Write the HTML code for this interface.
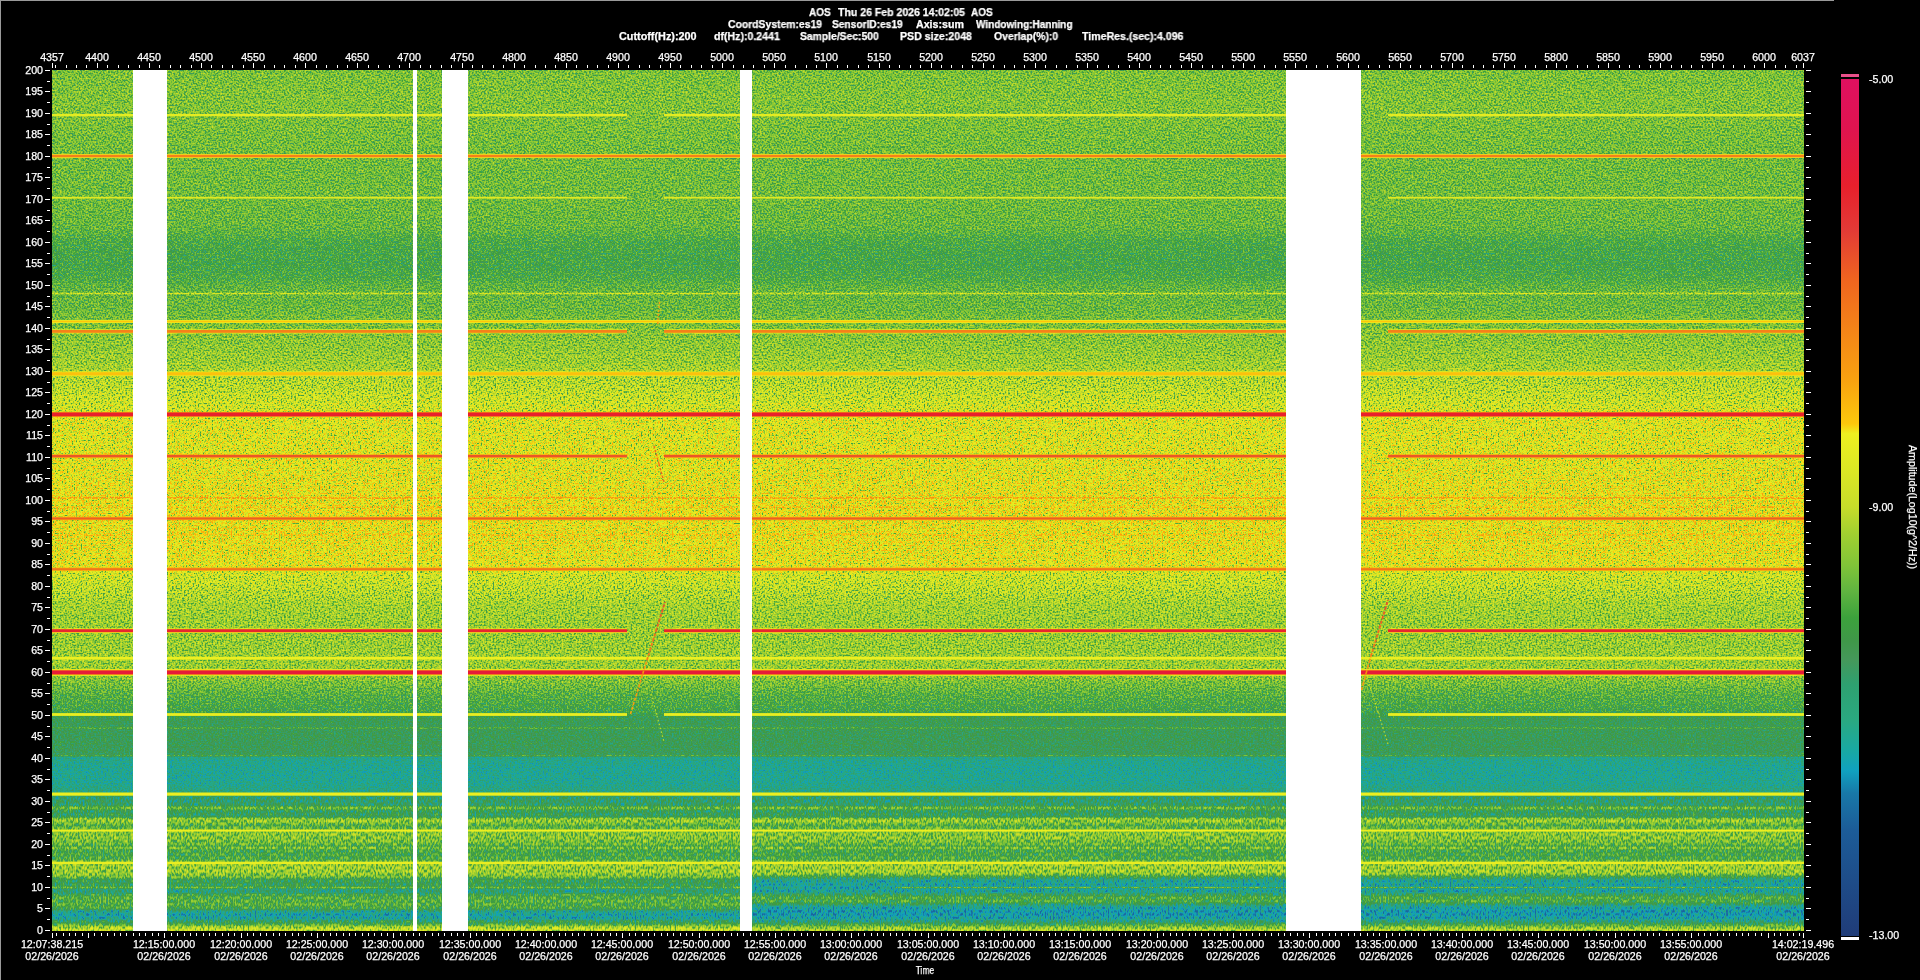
<!DOCTYPE html>
<html><head><meta charset="utf-8"><title>Spectrogram</title>
<style>
html,body{margin:0;padding:0;background:#000;}
body{width:1920px;height:980px;position:relative;overflow:hidden;font-family:"Liberation Sans",sans-serif;color:#fff;font-size:10.667px;}
.t{position:absolute;will-change:transform;-webkit-text-stroke:0.25px #fff;white-space:nowrap;line-height:12px;height:12px;}
.b{font-weight:bold;}
.c{transform:translateX(-50%);text-align:center;}
.r{text-align:right;}
svg{position:absolute;left:0;top:0;}
</style></head><body>

<svg width="1920" height="980" viewBox="0 0 1920 980" shape-rendering="crispEdges">
<defs>
<linearGradient id="prof" gradientUnits="userSpaceOnUse" x1="0" y1="70" x2="0" y2="931">
<stop offset="0.00000" stop-color="#6e6e6e"/>
<stop offset="0.03484" stop-color="#707070"/>
<stop offset="0.09292" stop-color="#6c6c6c"/>
<stop offset="0.15099" stop-color="#6b6b6b"/>
<stop offset="0.18002" stop-color="#696969"/>
<stop offset="0.18931" stop-color="#666666"/>
<stop offset="0.19512" stop-color="#626262"/>
<stop offset="0.20093" stop-color="#606060"/>
<stop offset="0.21487" stop-color="#5e5e5e"/>
<stop offset="0.22997" stop-color="#5e5e5e"/>
<stop offset="0.23693" stop-color="#606060"/>
<stop offset="0.24274" stop-color="#616161"/>
<stop offset="0.24971" stop-color="#666666"/>
<stop offset="0.26249" stop-color="#696969"/>
<stop offset="0.27875" stop-color="#6a6a6a"/>
<stop offset="0.29036" stop-color="#6d6d6d"/>
<stop offset="0.30778" stop-color="#717171"/>
<stop offset="0.33101" stop-color="#757575"/>
<stop offset="0.34843" stop-color="#797979"/>
<stop offset="0.36005" stop-color="#7e7e7e"/>
<stop offset="0.37747" stop-color="#838383"/>
<stop offset="0.39489" stop-color="#888888"/>
<stop offset="0.40418" stop-color="#8c8c8c"/>
<stop offset="0.42973" stop-color="#8c8c8c"/>
<stop offset="0.46458" stop-color="#8e8e8e"/>
<stop offset="0.49942" stop-color="#919191"/>
<stop offset="0.54588" stop-color="#919191"/>
<stop offset="0.57491" stop-color="#8e8e8e"/>
<stop offset="0.58653" stop-color="#878787"/>
<stop offset="0.60395" stop-color="#808080"/>
<stop offset="0.62137" stop-color="#797979"/>
<stop offset="0.64460" stop-color="#767676"/>
<stop offset="0.67364" stop-color="#767676"/>
<stop offset="0.69454" stop-color="#767676"/>
<stop offset="0.70383" stop-color="#737373"/>
<stop offset="0.71429" stop-color="#6c6c6c"/>
<stop offset="0.72590" stop-color="#646464"/>
<stop offset="0.73751" stop-color="#606060"/>
<stop offset="0.74564" stop-color="#5c5c5c"/>
<stop offset="0.75029" stop-color="#565656"/>
<stop offset="0.76074" stop-color="#545454"/>
<stop offset="0.77816" stop-color="#545454"/>
<stop offset="0.79559" stop-color="#535353"/>
<stop offset="0.79791" stop-color="#414141"/>
<stop offset="0.81301" stop-color="#3d3d3d"/>
<stop offset="0.82811" stop-color="#3e3e3e"/>
<stop offset="0.83624" stop-color="#434343"/>
<stop offset="0.83856" stop-color="#434343"/>
<stop offset="0.84437" stop-color="#4d4d4d"/>
<stop offset="0.85366" stop-color="#4e4e4e"/>
<stop offset="0.85540" stop-color="#606060"/>
<stop offset="0.85714" stop-color="#6c6c6c"/>
<stop offset="0.85889" stop-color="#606060"/>
<stop offset="0.86063" stop-color="#535353"/>
<stop offset="0.86760" stop-color="#565656"/>
<stop offset="0.86934" stop-color="#707070"/>
<stop offset="0.87224" stop-color="#767676"/>
<stop offset="0.87515" stop-color="#6c6c6c"/>
<stop offset="0.87689" stop-color="#636363"/>
<stop offset="0.88037" stop-color="#666666"/>
<stop offset="0.88269" stop-color="#707070"/>
<stop offset="0.88618" stop-color="#707070"/>
<stop offset="0.89199" stop-color="#717171"/>
<stop offset="0.89895" stop-color="#696969"/>
<stop offset="0.90128" stop-color="#606060"/>
<stop offset="0.90244" stop-color="#666666"/>
<stop offset="0.90360" stop-color="#737373"/>
<stop offset="0.90476" stop-color="#666666"/>
<stop offset="0.90592" stop-color="#606060"/>
<stop offset="0.90825" stop-color="#5e5e5e"/>
<stop offset="0.91638" stop-color="#606060"/>
<stop offset="0.91870" stop-color="#696969"/>
<stop offset="0.92334" stop-color="#767676"/>
<stop offset="0.93148" stop-color="#767676"/>
<stop offset="0.93728" stop-color="#6c6c6c"/>
<stop offset="0.93961" stop-color="#595959"/>
<stop offset="0.94657" stop-color="#545454"/>
<stop offset="0.94890" stop-color="#606060"/>
<stop offset="0.94971" stop-color="#696969"/>
<stop offset="0.95064" stop-color="#595959"/>
<stop offset="0.95180" stop-color="#494949"/>
<stop offset="0.95528" stop-color="#494949"/>
<stop offset="0.95761" stop-color="#5c5c5c"/>
<stop offset="0.96167" stop-color="#636363"/>
<stop offset="0.96980" stop-color="#636363"/>
<stop offset="0.97445" stop-color="#5c5c5c"/>
<stop offset="0.97677" stop-color="#434343"/>
<stop offset="0.98142" stop-color="#363636"/>
<stop offset="0.98606" stop-color="#3d3d3d"/>
<stop offset="0.98839" stop-color="#535353"/>
<stop offset="0.99187" stop-color="#5c5c5c"/>
<stop offset="0.99477" stop-color="#767676"/>
<stop offset="0.99768" stop-color="#838383"/>
<stop offset="1.00000" stop-color="#808080"/>
</linearGradient>
<linearGradient id="profr" gradientUnits="userSpaceOnUse" x1="0" y1="874" x2="0" y2="931">
<stop offset="0.00000" stop-color="#707070"/>
<stop offset="0.05263" stop-color="#595959"/>
<stop offset="0.10526" stop-color="#404040"/>
<stop offset="0.21053" stop-color="#393939"/>
<stop offset="0.31579" stop-color="#3d3d3d"/>
<stop offset="0.35965" stop-color="#535353"/>
<stop offset="0.40351" stop-color="#606060"/>
<stop offset="0.49123" stop-color="#606060"/>
<stop offset="0.53509" stop-color="#4d4d4d"/>
<stop offset="0.57895" stop-color="#393939"/>
<stop offset="0.68421" stop-color="#303030"/>
<stop offset="0.77193" stop-color="#363636"/>
<stop offset="0.82456" stop-color="#464646"/>
<stop offset="0.87719" stop-color="#595959"/>
<stop offset="0.92982" stop-color="#707070"/>
<stop offset="0.97368" stop-color="#7c7c7c"/>
<stop offset="1.00000" stop-color="#797979"/>
</linearGradient>
<filter id="spec0" x="0" y="0" width="100%" height="100%" filterUnits="objectBoundingBox" color-interpolation-filters="sRGB">
<feTurbulence type="fractalNoise" baseFrequency="0.58 0.6" numOctaves="1" seed="7" result="n"/>
<feColorMatrix in="n" type="matrix" values="1 0 0 0 0  1 0 0 0 0  1 0 0 0 0  0 0 0 0 1" result="ng"/>
<feTurbulence type="fractalNoise" baseFrequency="0.12 0.15" numOctaves="2" seed="23" result="m"/>
<feColorMatrix in="m" type="matrix" values="1 0 0 0 0  1 0 0 0 0  1 0 0 0 0  0 0 0 0 1" result="mg"/>
<feComponentTransfer in="ng" result="nt"><feFuncR type="table" tableValues="0.0000 0.0000 0.0000 0.0000 0.0000 0.0000 0.0000 0.0000 0.0000 0.0000 0.0000 0.0000 0.0000 0.0000 0.0000 0.0000 0.0765 0.1592 0.2283 0.2886 0.3478 0.3994 0.4493 0.5001 0.5505 0.5996 0.6443 0.6804 0.7148 0.7463 0.7742 0.8021 0.8284 0.8527 0.8785 0.9079 0.9405 0.9724 1.0000 1.0000 1.0000 1.0000 1.0000 1.0000 1.0000 1.0000 1.0000 1.0000 1.0000 1.0000 1.0000 1.0000"/><feFuncG type="table" tableValues="0.0000 0.0000 0.0000 0.0000 0.0000 0.0000 0.0000 0.0000 0.0000 0.0000 0.0000 0.0000 0.0000 0.0000 0.0000 0.0000 0.0765 0.1592 0.2283 0.2886 0.3478 0.3994 0.4493 0.5001 0.5505 0.5996 0.6443 0.6804 0.7148 0.7463 0.7742 0.8021 0.8284 0.8527 0.8785 0.9079 0.9405 0.9724 1.0000 1.0000 1.0000 1.0000 1.0000 1.0000 1.0000 1.0000 1.0000 1.0000 1.0000 1.0000 1.0000 1.0000"/><feFuncB type="table" tableValues="0.0000 0.0000 0.0000 0.0000 0.0000 0.0000 0.0000 0.0000 0.0000 0.0000 0.0000 0.0000 0.0000 0.0000 0.0000 0.0000 0.0765 0.1592 0.2283 0.2886 0.3478 0.3994 0.4493 0.5001 0.5505 0.5996 0.6443 0.6804 0.7148 0.7463 0.7742 0.8021 0.8284 0.8527 0.8785 0.9079 0.9405 0.9724 1.0000 1.0000 1.0000 1.0000 1.0000 1.0000 1.0000 1.0000 1.0000 1.0000 1.0000 1.0000 1.0000 1.0000"/></feComponentTransfer>
<feComposite in="SourceGraphic" in2="nt" operator="arithmetic" k1="0" k2="1" k3="0.2000" k4="-0.1250" result="s1"/>
<feComposite in="s1" in2="mg" operator="arithmetic" k1="0" k2="1" k3="0.04" k4="-0.02" result="sum"/>
<feComponentTransfer in="sum">
<feFuncR type="table" tableValues="0.1176 0.1157 0.1137 0.1117 0.1097 0.1077 0.1058 0.1038 0.1014 0.0942 0.0870 0.0782 0.0665 0.0776 0.1012 0.1306 0.1600 0.1697 0.1756 0.1902 0.2392 0.2647 0.2484 0.2406 0.2522 0.3228 0.3922 0.4575 0.5197 0.5753 0.6308 0.7029 0.7765 0.8073 0.8381 0.8679 0.8939 0.9198 0.9699 0.9848 0.9802 0.9756 0.9712 0.9668 0.9624 0.9581 0.9538 0.9495 0.9453 0.9406 0.9260 0.9114 0.8968 0.8883 0.8955 0.9026 0.9098 0.9023 0.8947 0.8872 0.8796 0.8784 0.8784 0.8784 0.8784"/>
<feFuncG type="table" tableValues="0.3294 0.3453 0.3611 0.3769 0.3928 0.4086 0.4245 0.4403 0.4581 0.4985 0.5389 0.5782 0.6155 0.6423 0.6588 0.6588 0.6588 0.6488 0.6370 0.6240 0.6070 0.5961 0.5961 0.6176 0.6438 0.6791 0.7137 0.7464 0.7749 0.7945 0.8141 0.8382 0.8627 0.8796 0.8964 0.9121 0.9236 0.9352 0.8366 0.7497 0.7041 0.6585 0.6177 0.5872 0.5567 0.5262 0.4939 0.4608 0.4278 0.3943 0.3494 0.3046 0.2597 0.2187 0.1877 0.1566 0.1255 0.1142 0.1029 0.0916 0.0802 0.0750 0.0709 0.0668 0.0627"/>
<feFuncB type="table" tableValues="0.5647 0.5756 0.5865 0.5974 0.6083 0.6192 0.6301 0.6410 0.6526 0.6728 0.6930 0.7160 0.7440 0.7011 0.6290 0.5702 0.5114 0.4820 0.4582 0.4298 0.3829 0.3353 0.2863 0.2566 0.2372 0.2450 0.2471 0.2307 0.2154 0.2024 0.1893 0.1770 0.1647 0.1563 0.1479 0.1400 0.1343 0.1285 0.0732 0.0505 0.0551 0.0596 0.0655 0.0742 0.0830 0.0917 0.0995 0.1069 0.1144 0.1225 0.1465 0.1705 0.1945 0.2084 0.1965 0.1845 0.1725 0.2046 0.2367 0.2687 0.3008 0.3213 0.3397 0.3581 0.3765"/>
</feComponentTransfer>
</filter>
<filter id="spec1" x="0" y="0" width="100%" height="100%" filterUnits="objectBoundingBox" color-interpolation-filters="sRGB">
<feTurbulence type="fractalNoise" baseFrequency="0.58 0.6" numOctaves="1" seed="9" result="n"/>
<feColorMatrix in="n" type="matrix" values="1 0 0 0 0  1 0 0 0 0  1 0 0 0 0  0 0 0 0 1" result="ng"/>
<feTurbulence type="fractalNoise" baseFrequency="0.12 0.15" numOctaves="2" seed="23" result="m"/>
<feColorMatrix in="m" type="matrix" values="1 0 0 0 0  1 0 0 0 0  1 0 0 0 0  0 0 0 0 1" result="mg"/>
<feComponentTransfer in="ng" result="nt"><feFuncR type="table" tableValues="0.0000 0.0000 0.0000 0.0000 0.0000 0.0000 0.0000 0.0000 0.0000 0.0000 0.0000 0.0000 0.0000 0.0000 0.0000 0.0280 0.1293 0.2116 0.2797 0.3384 0.3954 0.4445 0.4915 0.5387 0.5850 0.6295 0.6693 0.7012 0.7310 0.7581 0.7818 0.8053 0.8272 0.8474 0.8684 0.8923 0.9184 0.9438 0.9673 0.9889 1.0000 1.0000 1.0000 1.0000 1.0000 1.0000 1.0000 1.0000 1.0000 1.0000 1.0000 1.0000"/><feFuncG type="table" tableValues="0.0000 0.0000 0.0000 0.0000 0.0000 0.0000 0.0000 0.0000 0.0000 0.0000 0.0000 0.0000 0.0000 0.0000 0.0000 0.0280 0.1293 0.2116 0.2797 0.3384 0.3954 0.4445 0.4915 0.5387 0.5850 0.6295 0.6693 0.7012 0.7310 0.7581 0.7818 0.8053 0.8272 0.8474 0.8684 0.8923 0.9184 0.9438 0.9673 0.9889 1.0000 1.0000 1.0000 1.0000 1.0000 1.0000 1.0000 1.0000 1.0000 1.0000 1.0000 1.0000"/><feFuncB type="table" tableValues="0.0000 0.0000 0.0000 0.0000 0.0000 0.0000 0.0000 0.0000 0.0000 0.0000 0.0000 0.0000 0.0000 0.0000 0.0000 0.0280 0.1293 0.2116 0.2797 0.3384 0.3954 0.4445 0.4915 0.5387 0.5850 0.6295 0.6693 0.7012 0.7310 0.7581 0.7818 0.8053 0.8272 0.8474 0.8684 0.8923 0.9184 0.9438 0.9673 0.9889 1.0000 1.0000 1.0000 1.0000 1.0000 1.0000 1.0000 1.0000 1.0000 1.0000 1.0000 1.0000"/></feComponentTransfer>
<feComposite in="SourceGraphic" in2="nt" operator="arithmetic" k1="0" k2="1" k3="0.2875" k4="-0.1875" result="s1"/>
<feComposite in="s1" in2="mg" operator="arithmetic" k1="0" k2="1" k3="0.04" k4="-0.02" result="sum"/>
<feComponentTransfer in="sum">
<feFuncR type="table" tableValues="0.1176 0.1157 0.1137 0.1117 0.1097 0.1077 0.1058 0.1038 0.1014 0.0942 0.0870 0.0782 0.0665 0.0776 0.1012 0.1306 0.1600 0.1697 0.1756 0.1902 0.2392 0.2647 0.2484 0.2406 0.2522 0.3228 0.3922 0.4575 0.5197 0.5753 0.6308 0.7029 0.7765 0.8073 0.8381 0.8679 0.8939 0.9198 0.9699 0.9848 0.9802 0.9756 0.9712 0.9668 0.9624 0.9581 0.9538 0.9495 0.9453 0.9406 0.9260 0.9114 0.8968 0.8883 0.8955 0.9026 0.9098 0.9023 0.8947 0.8872 0.8796 0.8784 0.8784 0.8784 0.8784"/>
<feFuncG type="table" tableValues="0.3294 0.3453 0.3611 0.3769 0.3928 0.4086 0.4245 0.4403 0.4581 0.4985 0.5389 0.5782 0.6155 0.6423 0.6588 0.6588 0.6588 0.6488 0.6370 0.6240 0.6070 0.5961 0.5961 0.6176 0.6438 0.6791 0.7137 0.7464 0.7749 0.7945 0.8141 0.8382 0.8627 0.8796 0.8964 0.9121 0.9236 0.9352 0.8366 0.7497 0.7041 0.6585 0.6177 0.5872 0.5567 0.5262 0.4939 0.4608 0.4278 0.3943 0.3494 0.3046 0.2597 0.2187 0.1877 0.1566 0.1255 0.1142 0.1029 0.0916 0.0802 0.0750 0.0709 0.0668 0.0627"/>
<feFuncB type="table" tableValues="0.5647 0.5756 0.5865 0.5974 0.6083 0.6192 0.6301 0.6410 0.6526 0.6728 0.6930 0.7160 0.7440 0.7011 0.6290 0.5702 0.5114 0.4820 0.4582 0.4298 0.3829 0.3353 0.2863 0.2566 0.2372 0.2450 0.2471 0.2307 0.2154 0.2024 0.1893 0.1770 0.1647 0.1563 0.1479 0.1400 0.1343 0.1285 0.0732 0.0505 0.0551 0.0596 0.0655 0.0742 0.0830 0.0917 0.0995 0.1069 0.1144 0.1225 0.1465 0.1705 0.1945 0.2084 0.1965 0.1845 0.1725 0.2046 0.2367 0.2687 0.3008 0.3213 0.3397 0.3581 0.3765"/>
</feComponentTransfer>
</filter>
<filter id="spec2" x="0" y="0" width="100%" height="100%" filterUnits="objectBoundingBox" color-interpolation-filters="sRGB">
<feTurbulence type="fractalNoise" baseFrequency="0.58 0.6" numOctaves="1" seed="17" result="n"/>
<feColorMatrix in="n" type="matrix" values="1 0 0 0 0  1 0 0 0 0  1 0 0 0 0  0 0 0 0 1" result="ng"/>
<feTurbulence type="fractalNoise" baseFrequency="0.12 0.15" numOctaves="2" seed="23" result="m"/>
<feColorMatrix in="m" type="matrix" values="1 0 0 0 0  1 0 0 0 0  1 0 0 0 0  0 0 0 0 1" result="mg"/>
<feComponentTransfer in="ng" result="nt"><feFuncR type="table" tableValues="0.0000 0.0000 0.0000 0.0000 0.0000 0.0000 0.0000 0.0000 0.0000 0.0000 0.0000 0.0000 0.0000 0.0000 0.0000 0.0000 0.0149 0.1031 0.1769 0.2412 0.3043 0.3593 0.4126 0.4668 0.5206 0.5729 0.6205 0.6591 0.6957 0.7294 0.7591 0.7889 0.8169 0.8429 0.8704 0.9017 0.9365 0.9706 1.0000 1.0000 1.0000 1.0000 1.0000 1.0000 1.0000 1.0000 1.0000 1.0000 1.0000 1.0000 1.0000 1.0000"/><feFuncG type="table" tableValues="0.0000 0.0000 0.0000 0.0000 0.0000 0.0000 0.0000 0.0000 0.0000 0.0000 0.0000 0.0000 0.0000 0.0000 0.0000 0.0000 0.0149 0.1031 0.1769 0.2412 0.3043 0.3593 0.4126 0.4668 0.5206 0.5729 0.6205 0.6591 0.6957 0.7294 0.7591 0.7889 0.8169 0.8429 0.8704 0.9017 0.9365 0.9706 1.0000 1.0000 1.0000 1.0000 1.0000 1.0000 1.0000 1.0000 1.0000 1.0000 1.0000 1.0000 1.0000 1.0000"/><feFuncB type="table" tableValues="0.0000 0.0000 0.0000 0.0000 0.0000 0.0000 0.0000 0.0000 0.0000 0.0000 0.0000 0.0000 0.0000 0.0000 0.0000 0.0000 0.0149 0.1031 0.1769 0.2412 0.3043 0.3593 0.4126 0.4668 0.5206 0.5729 0.6205 0.6591 0.6957 0.7294 0.7591 0.7889 0.8169 0.8429 0.8704 0.9017 0.9365 0.9706 1.0000 1.0000 1.0000 1.0000 1.0000 1.0000 1.0000 1.0000 1.0000 1.0000 1.0000 1.0000 1.0000 1.0000"/></feComponentTransfer>
<feComposite in="SourceGraphic" in2="nt" operator="arithmetic" k1="0" k2="1" k3="0.1875" k4="-0.1125" result="s1"/>
<feComposite in="s1" in2="mg" operator="arithmetic" k1="0" k2="1" k3="0.04" k4="-0.02" result="sum"/>
<feComponentTransfer in="sum">
<feFuncR type="table" tableValues="0.1176 0.1157 0.1137 0.1117 0.1097 0.1077 0.1058 0.1038 0.1014 0.0942 0.0870 0.0782 0.0665 0.0776 0.1012 0.1306 0.1600 0.1697 0.1756 0.1902 0.2392 0.2647 0.2484 0.2406 0.2522 0.3228 0.3922 0.4575 0.5197 0.5753 0.6308 0.7029 0.7765 0.8073 0.8381 0.8679 0.8939 0.9198 0.9699 0.9848 0.9802 0.9756 0.9712 0.9668 0.9624 0.9581 0.9538 0.9495 0.9453 0.9406 0.9260 0.9114 0.8968 0.8883 0.8955 0.9026 0.9098 0.9023 0.8947 0.8872 0.8796 0.8784 0.8784 0.8784 0.8784"/>
<feFuncG type="table" tableValues="0.3294 0.3453 0.3611 0.3769 0.3928 0.4086 0.4245 0.4403 0.4581 0.4985 0.5389 0.5782 0.6155 0.6423 0.6588 0.6588 0.6588 0.6488 0.6370 0.6240 0.6070 0.5961 0.5961 0.6176 0.6438 0.6791 0.7137 0.7464 0.7749 0.7945 0.8141 0.8382 0.8627 0.8796 0.8964 0.9121 0.9236 0.9352 0.8366 0.7497 0.7041 0.6585 0.6177 0.5872 0.5567 0.5262 0.4939 0.4608 0.4278 0.3943 0.3494 0.3046 0.2597 0.2187 0.1877 0.1566 0.1255 0.1142 0.1029 0.0916 0.0802 0.0750 0.0709 0.0668 0.0627"/>
<feFuncB type="table" tableValues="0.5647 0.5756 0.5865 0.5974 0.6083 0.6192 0.6301 0.6410 0.6526 0.6728 0.6930 0.7160 0.7440 0.7011 0.6290 0.5702 0.5114 0.4820 0.4582 0.4298 0.3829 0.3353 0.2863 0.2566 0.2372 0.2450 0.2471 0.2307 0.2154 0.2024 0.1893 0.1770 0.1647 0.1563 0.1479 0.1400 0.1343 0.1285 0.0732 0.0505 0.0551 0.0596 0.0655 0.0742 0.0830 0.0917 0.0995 0.1069 0.1144 0.1225 0.1465 0.1705 0.1945 0.2084 0.1965 0.1845 0.1725 0.2046 0.2367 0.2687 0.3008 0.3213 0.3397 0.3581 0.3765"/>
</feComponentTransfer>
</filter>
<filter id="spec3" x="0" y="0" width="100%" height="100%" filterUnits="objectBoundingBox" color-interpolation-filters="sRGB">
<feTurbulence type="fractalNoise" baseFrequency="0.58 0.6" numOctaves="1" seed="13" result="n"/>
<feColorMatrix in="n" type="matrix" values="1 0 0 0 0  1 0 0 0 0  1 0 0 0 0  0 0 0 0 1" result="ng"/>
<feTurbulence type="fractalNoise" baseFrequency="0.12 0.15" numOctaves="2" seed="23" result="m"/>
<feColorMatrix in="m" type="matrix" values="1 0 0 0 0  1 0 0 0 0  1 0 0 0 0  0 0 0 0 1" result="mg"/>
<feComponentTransfer in="ng" result="nt"><feFuncR type="table" tableValues="0.0000 0.0000 0.0000 0.0000 0.0000 0.0000 0.0000 0.0000 0.0000 0.0000 0.0000 0.0000 0.0000 0.0000 0.0000 0.0000 0.0515 0.1212 0.1806 0.2333 0.2859 0.3324 0.3782 0.4255 0.4733 0.5207 0.5656 0.6040 0.6410 0.6755 0.7064 0.7378 0.7677 0.7958 0.8258 0.8605 0.8996 0.9384 0.9752 1.0000 1.0000 1.0000 1.0000 1.0000 1.0000 1.0000 1.0000 1.0000 1.0000 1.0000 1.0000 1.0000"/><feFuncG type="table" tableValues="0.0000 0.0000 0.0000 0.0000 0.0000 0.0000 0.0000 0.0000 0.0000 0.0000 0.0000 0.0000 0.0000 0.0000 0.0000 0.0000 0.0515 0.1212 0.1806 0.2333 0.2859 0.3324 0.3782 0.4255 0.4733 0.5207 0.5656 0.6040 0.6410 0.6755 0.7064 0.7378 0.7677 0.7958 0.8258 0.8605 0.8996 0.9384 0.9752 1.0000 1.0000 1.0000 1.0000 1.0000 1.0000 1.0000 1.0000 1.0000 1.0000 1.0000 1.0000 1.0000"/><feFuncB type="table" tableValues="0.0000 0.0000 0.0000 0.0000 0.0000 0.0000 0.0000 0.0000 0.0000 0.0000 0.0000 0.0000 0.0000 0.0000 0.0000 0.0000 0.0515 0.1212 0.1806 0.2333 0.2859 0.3324 0.3782 0.4255 0.4733 0.5207 0.5656 0.6040 0.6410 0.6755 0.7064 0.7378 0.7677 0.7958 0.8258 0.8605 0.8996 0.9384 0.9752 1.0000 1.0000 1.0000 1.0000 1.0000 1.0000 1.0000 1.0000 1.0000 1.0000 1.0000 1.0000 1.0000"/></feComponentTransfer>
<feComposite in="SourceGraphic" in2="nt" operator="arithmetic" k1="0" k2="1" k3="0.1375" k4="-0.0750" result="s1"/>
<feComposite in="s1" in2="mg" operator="arithmetic" k1="0" k2="1" k3="0.04" k4="-0.02" result="sum"/>
<feComponentTransfer in="sum">
<feFuncR type="table" tableValues="0.1176 0.1157 0.1137 0.1117 0.1097 0.1077 0.1058 0.1038 0.1014 0.0942 0.0870 0.0782 0.0665 0.0776 0.1012 0.1306 0.1600 0.1697 0.1756 0.1902 0.2392 0.2647 0.2484 0.2406 0.2522 0.3228 0.3922 0.4575 0.5197 0.5753 0.6308 0.7029 0.7765 0.8073 0.8381 0.8679 0.8939 0.9198 0.9699 0.9848 0.9802 0.9756 0.9712 0.9668 0.9624 0.9581 0.9538 0.9495 0.9453 0.9406 0.9260 0.9114 0.8968 0.8883 0.8955 0.9026 0.9098 0.9023 0.8947 0.8872 0.8796 0.8784 0.8784 0.8784 0.8784"/>
<feFuncG type="table" tableValues="0.3294 0.3453 0.3611 0.3769 0.3928 0.4086 0.4245 0.4403 0.4581 0.4985 0.5389 0.5782 0.6155 0.6423 0.6588 0.6588 0.6588 0.6488 0.6370 0.6240 0.6070 0.5961 0.5961 0.6176 0.6438 0.6791 0.7137 0.7464 0.7749 0.7945 0.8141 0.8382 0.8627 0.8796 0.8964 0.9121 0.9236 0.9352 0.8366 0.7497 0.7041 0.6585 0.6177 0.5872 0.5567 0.5262 0.4939 0.4608 0.4278 0.3943 0.3494 0.3046 0.2597 0.2187 0.1877 0.1566 0.1255 0.1142 0.1029 0.0916 0.0802 0.0750 0.0709 0.0668 0.0627"/>
<feFuncB type="table" tableValues="0.5647 0.5756 0.5865 0.5974 0.6083 0.6192 0.6301 0.6410 0.6526 0.6728 0.6930 0.7160 0.7440 0.7011 0.6290 0.5702 0.5114 0.4820 0.4582 0.4298 0.3829 0.3353 0.2863 0.2566 0.2372 0.2450 0.2471 0.2307 0.2154 0.2024 0.1893 0.1770 0.1647 0.1563 0.1479 0.1400 0.1343 0.1285 0.0732 0.0505 0.0551 0.0596 0.0655 0.0742 0.0830 0.0917 0.0995 0.1069 0.1144 0.1225 0.1465 0.1705 0.1945 0.2084 0.1965 0.1845 0.1725 0.2046 0.2367 0.2687 0.3008 0.3213 0.3397 0.3581 0.3765"/>
</feComponentTransfer>
</filter>
<filter id="spec4" x="0" y="0" width="100%" height="100%" filterUnits="objectBoundingBox" color-interpolation-filters="sRGB">
<feTurbulence type="fractalNoise" baseFrequency="0.6 0.3" numOctaves="1" seed="11" result="n"/>
<feColorMatrix in="n" type="matrix" values="1 0 0 0 0  1 0 0 0 0  1 0 0 0 0  0 0 0 0 1" result="ng"/>
<feTurbulence type="fractalNoise" baseFrequency="0.12 0.15" numOctaves="2" seed="23" result="m"/>
<feColorMatrix in="m" type="matrix" values="1 0 0 0 0  1 0 0 0 0  1 0 0 0 0  0 0 0 0 1" result="mg"/>
<feComponentTransfer in="ng" result="nt"><feFuncR type="table" tableValues="0.0000 0.0000 0.0000 0.0000 0.0000 0.0000 0.0000 0.0000 0.0000 0.0000 0.0000 0.0000 0.0000 0.0000 0.0000 0.0000 0.0765 0.1592 0.2283 0.2886 0.3478 0.3994 0.4493 0.5001 0.5505 0.5996 0.6455 0.6839 0.7204 0.7539 0.7835 0.8131 0.8411 0.8670 0.8943 0.9256 0.9602 0.9941 1.0000 1.0000 1.0000 1.0000 1.0000 1.0000 1.0000 1.0000 1.0000 1.0000 1.0000 1.0000 1.0000 1.0000"/><feFuncG type="table" tableValues="0.0000 0.0000 0.0000 0.0000 0.0000 0.0000 0.0000 0.0000 0.0000 0.0000 0.0000 0.0000 0.0000 0.0000 0.0000 0.0000 0.0765 0.1592 0.2283 0.2886 0.3478 0.3994 0.4493 0.5001 0.5505 0.5996 0.6455 0.6839 0.7204 0.7539 0.7835 0.8131 0.8411 0.8670 0.8943 0.9256 0.9602 0.9941 1.0000 1.0000 1.0000 1.0000 1.0000 1.0000 1.0000 1.0000 1.0000 1.0000 1.0000 1.0000 1.0000 1.0000"/><feFuncB type="table" tableValues="0.0000 0.0000 0.0000 0.0000 0.0000 0.0000 0.0000 0.0000 0.0000 0.0000 0.0000 0.0000 0.0000 0.0000 0.0000 0.0000 0.0765 0.1592 0.2283 0.2886 0.3478 0.3994 0.4493 0.5001 0.5505 0.5996 0.6455 0.6839 0.7204 0.7539 0.7835 0.8131 0.8411 0.8670 0.8943 0.9256 0.9602 0.9941 1.0000 1.0000 1.0000 1.0000 1.0000 1.0000 1.0000 1.0000 1.0000 1.0000 1.0000 1.0000 1.0000 1.0000"/></feComponentTransfer>
<feComposite in="SourceGraphic" in2="nt" operator="arithmetic" k1="0" k2="1" k3="0.2000" k4="-0.1250" result="s1"/>
<feComposite in="s1" in2="mg" operator="arithmetic" k1="0" k2="1" k3="0.04" k4="-0.02" result="sum"/>
<feComponentTransfer in="sum">
<feFuncR type="table" tableValues="0.1176 0.1157 0.1137 0.1117 0.1097 0.1077 0.1058 0.1038 0.1014 0.0942 0.0870 0.0782 0.0665 0.0776 0.1012 0.1306 0.1600 0.1697 0.1756 0.1902 0.2392 0.2647 0.2484 0.2406 0.2522 0.3228 0.3922 0.4575 0.5197 0.5753 0.6308 0.7029 0.7765 0.8073 0.8381 0.8679 0.8939 0.9198 0.9699 0.9848 0.9802 0.9756 0.9712 0.9668 0.9624 0.9581 0.9538 0.9495 0.9453 0.9406 0.9260 0.9114 0.8968 0.8883 0.8955 0.9026 0.9098 0.9023 0.8947 0.8872 0.8796 0.8784 0.8784 0.8784 0.8784"/>
<feFuncG type="table" tableValues="0.3294 0.3453 0.3611 0.3769 0.3928 0.4086 0.4245 0.4403 0.4581 0.4985 0.5389 0.5782 0.6155 0.6423 0.6588 0.6588 0.6588 0.6488 0.6370 0.6240 0.6070 0.5961 0.5961 0.6176 0.6438 0.6791 0.7137 0.7464 0.7749 0.7945 0.8141 0.8382 0.8627 0.8796 0.8964 0.9121 0.9236 0.9352 0.8366 0.7497 0.7041 0.6585 0.6177 0.5872 0.5567 0.5262 0.4939 0.4608 0.4278 0.3943 0.3494 0.3046 0.2597 0.2187 0.1877 0.1566 0.1255 0.1142 0.1029 0.0916 0.0802 0.0750 0.0709 0.0668 0.0627"/>
<feFuncB type="table" tableValues="0.5647 0.5756 0.5865 0.5974 0.6083 0.6192 0.6301 0.6410 0.6526 0.6728 0.6930 0.7160 0.7440 0.7011 0.6290 0.5702 0.5114 0.4820 0.4582 0.4298 0.3829 0.3353 0.2863 0.2566 0.2372 0.2450 0.2471 0.2307 0.2154 0.2024 0.1893 0.1770 0.1647 0.1563 0.1479 0.1400 0.1343 0.1285 0.0732 0.0505 0.0551 0.0596 0.0655 0.0742 0.0830 0.0917 0.0995 0.1069 0.1144 0.1225 0.1465 0.1705 0.1945 0.2084 0.1965 0.1845 0.1725 0.2046 0.2367 0.2687 0.3008 0.3213 0.3397 0.3581 0.3765"/>
</feComponentTransfer>
</filter>
<linearGradient id="cb" x1="0" y1="0" x2="0" y2="1">
<stop offset="0.0000" stop-color="#e01060"/>
<stop offset="0.0600" stop-color="#e0144e"/>
<stop offset="0.1250" stop-color="#e8202c"/>
<stop offset="0.1763" stop-color="#e23a36"/>
<stop offset="0.2350" stop-color="#f0651f"/>
<stop offset="0.2925" stop-color="#f48418"/>
<stop offset="0.3488" stop-color="#f8a010"/>
<stop offset="0.4025" stop-color="#fcc80c"/>
<stop offset="0.4138" stop-color="#eef020"/>
<stop offset="0.4563" stop-color="#dce824"/>
<stop offset="0.5000" stop-color="#c6dc2a"/>
<stop offset="0.5300" stop-color="#a2d030"/>
<stop offset="0.5675" stop-color="#80c438"/>
<stop offset="0.5975" stop-color="#60b440"/>
<stop offset="0.6287" stop-color="#3ca23c"/>
<stop offset="0.6550" stop-color="#3f9848"/>
<stop offset="0.6775" stop-color="#45985a"/>
<stop offset="0.7063" stop-color="#2ea070"/>
<stop offset="0.7475" stop-color="#2aa880"/>
<stop offset="0.7850" stop-color="#18a8a4"/>
<stop offset="0.8075" stop-color="#10a0c0"/>
<stop offset="0.8337" stop-color="#1878a8"/>
<stop offset="0.8762" stop-color="#1c5c98"/>
<stop offset="1.0000" stop-color="#203c78"/>
</linearGradient>
</defs>
<rect x="0" y="0" width="1834" height="1" fill="#9a9a9a"/>
<rect x="0" y="0" width="1" height="980" fill="#9a9a9a"/>
<g filter="url(#spec0)"><rect x="52" y="70" width="1752" height="304" fill="url(#prof)"/><rect x="52" y="292.7" width="1752" height="1.6" fill="#8c8c8c" fill-opacity="0.8" shape-rendering="auto"/></g>
<g filter="url(#spec1)"><rect x="52" y="374" width="1752" height="226" fill="url(#prof)"/><rect x="52" y="497.2" width="1752" height="1.5" fill="#acacac" fill-opacity="0.85" shape-rendering="auto"/><rect x="52" y="506.6" width="1752" height="1.5" fill="#a6a6a6" fill-opacity="0.5" shape-rendering="auto"/><rect x="52" y="534.0" width="1752" height="1.5" fill="#a6a6a6" fill-opacity="0.45" shape-rendering="auto"/></g>
<g filter="url(#spec2)"><rect x="52" y="600" width="1752" height="115" fill="url(#prof)"/></g>
<g filter="url(#spec3)"><rect x="52" y="715" width="1752" height="82" fill="url(#prof)"/><rect x="52" y="727.2" width="1752" height="1.5" fill="#707070" fill-opacity="0.6" shape-rendering="auto"/><rect x="52" y="755.1" width="1752" height="1.3" fill="#6c6c6c" fill-opacity="0.7" shape-rendering="auto"/></g>
<g filter="url(#spec4)"><rect x="52" y="797" width="1752" height="134" fill="url(#prof)"/><rect x="752" y="874" width="1052" height="57" fill="url(#profr)"/><rect x="895" y="886.8" width="909" height="1.5" fill="#767676" fill-opacity="0.7" shape-rendering="auto"/></g>
<rect x="52" y="113.9" width="81" height="2.4" fill="#e4ec22" shape-rendering="auto"/>
<rect x="167" y="113.9" width="246" height="2.4" fill="#e4ec22" shape-rendering="auto"/>
<rect x="417" y="113.9" width="25" height="2.4" fill="#e4ec22" shape-rendering="auto"/>
<rect x="468" y="113.9" width="159" height="2.4" fill="#e4ec22" shape-rendering="auto"/>
<rect x="664" y="113.9" width="76" height="2.4" fill="#e4ec22" shape-rendering="auto"/>
<rect x="752" y="113.9" width="534" height="2.4" fill="#e4ec22" shape-rendering="auto"/>
<rect x="1388" y="113.9" width="416" height="2.4" fill="#e4ec22" shape-rendering="auto"/>
<rect x="52" y="154.0" width="81" height="4.0" fill="#e9ee21" shape-rendering="auto"/>
<rect x="167" y="154.0" width="246" height="4.0" fill="#e9ee21" shape-rendering="auto"/>
<rect x="417" y="154.0" width="25" height="4.0" fill="#e9ee21" shape-rendering="auto"/>
<rect x="468" y="154.0" width="272" height="4.0" fill="#e9ee21" shape-rendering="auto"/>
<rect x="752" y="154.0" width="534" height="4.0" fill="#e9ee21" shape-rendering="auto"/>
<rect x="1361" y="154.0" width="443" height="4.0" fill="#e9ee21" shape-rendering="auto"/>
<rect x="52" y="154.7" width="81" height="2.6" fill="#f48119" shape-rendering="auto"/>
<rect x="167" y="154.7" width="246" height="2.6" fill="#f48119" shape-rendering="auto"/>
<rect x="417" y="154.7" width="25" height="2.6" fill="#f48119" shape-rendering="auto"/>
<rect x="468" y="154.7" width="272" height="2.6" fill="#f48119" shape-rendering="auto"/>
<rect x="752" y="154.7" width="534" height="2.6" fill="#f48119" shape-rendering="auto"/>
<rect x="1361" y="154.7" width="443" height="2.6" fill="#f48119" shape-rendering="auto"/>
<rect x="52" y="196.8" width="81" height="1.8" fill="#dfe923" shape-rendering="auto"/>
<rect x="167" y="196.8" width="246" height="1.8" fill="#dfe923" shape-rendering="auto"/>
<rect x="417" y="196.8" width="25" height="1.8" fill="#dfe923" shape-rendering="auto"/>
<rect x="468" y="196.8" width="159" height="1.8" fill="#dfe923" shape-rendering="auto"/>
<rect x="664" y="196.8" width="76" height="1.8" fill="#dfe923" shape-rendering="auto"/>
<rect x="752" y="196.8" width="534" height="1.8" fill="#dfe923" shape-rendering="auto"/>
<rect x="1388" y="196.8" width="416" height="1.8" fill="#dfe923" shape-rendering="auto"/>
<rect x="52" y="320.0" width="81" height="3.0" fill="#e9ee21" shape-rendering="auto"/>
<rect x="167" y="320.0" width="246" height="3.0" fill="#e9ee21" shape-rendering="auto"/>
<rect x="417" y="320.0" width="25" height="3.0" fill="#e9ee21" shape-rendering="auto"/>
<rect x="468" y="320.0" width="272" height="3.0" fill="#e9ee21" shape-rendering="auto"/>
<rect x="752" y="320.0" width="534" height="3.0" fill="#e9ee21" shape-rendering="auto"/>
<rect x="1361" y="320.0" width="443" height="3.0" fill="#e9ee21" shape-rendering="auto"/>
<rect x="52" y="320.7" width="81" height="1.6" fill="#fcc60c" shape-rendering="auto"/>
<rect x="167" y="320.7" width="246" height="1.6" fill="#fcc60c" shape-rendering="auto"/>
<rect x="417" y="320.7" width="25" height="1.6" fill="#fcc60c" shape-rendering="auto"/>
<rect x="468" y="320.7" width="272" height="1.6" fill="#fcc60c" shape-rendering="auto"/>
<rect x="752" y="320.7" width="534" height="1.6" fill="#fcc60c" shape-rendering="auto"/>
<rect x="1361" y="320.7" width="443" height="1.6" fill="#fcc60c" shape-rendering="auto"/>
<rect x="52" y="329.3" width="81" height="4.2" fill="#e9ee21" shape-rendering="auto"/>
<rect x="167" y="329.3" width="246" height="4.2" fill="#e9ee21" shape-rendering="auto"/>
<rect x="417" y="329.3" width="25" height="4.2" fill="#e9ee21" shape-rendering="auto"/>
<rect x="468" y="329.3" width="159" height="4.2" fill="#e9ee21" shape-rendering="auto"/>
<rect x="664" y="329.3" width="76" height="4.2" fill="#e9ee21" shape-rendering="auto"/>
<rect x="752" y="329.3" width="534" height="4.2" fill="#e9ee21" shape-rendering="auto"/>
<rect x="1388" y="329.3" width="416" height="4.2" fill="#e9ee21" shape-rendering="auto"/>
<rect x="52" y="330.0" width="81" height="2.8" fill="#f48119" shape-rendering="auto"/>
<rect x="167" y="330.0" width="246" height="2.8" fill="#f48119" shape-rendering="auto"/>
<rect x="417" y="330.0" width="25" height="2.8" fill="#f48119" shape-rendering="auto"/>
<rect x="468" y="330.0" width="159" height="2.8" fill="#f48119" shape-rendering="auto"/>
<rect x="664" y="330.0" width="76" height="2.8" fill="#f48119" shape-rendering="auto"/>
<rect x="752" y="330.0" width="534" height="2.8" fill="#f48119" shape-rendering="auto"/>
<rect x="1388" y="330.0" width="416" height="2.8" fill="#f48119" shape-rendering="auto"/>
<rect x="52" y="371.4" width="81" height="4.8" fill="#e7ed22" shape-rendering="auto"/>
<rect x="167" y="371.4" width="246" height="4.8" fill="#e7ed22" shape-rendering="auto"/>
<rect x="417" y="371.4" width="25" height="4.8" fill="#e7ed22" shape-rendering="auto"/>
<rect x="468" y="371.4" width="272" height="4.8" fill="#e7ed22" shape-rendering="auto"/>
<rect x="752" y="371.4" width="534" height="4.8" fill="#e7ed22" shape-rendering="auto"/>
<rect x="1361" y="371.4" width="443" height="4.8" fill="#e7ed22" shape-rendering="auto"/>
<rect x="52" y="372.2" width="81" height="3.2" fill="#fbc10d" shape-rendering="auto"/>
<rect x="167" y="372.2" width="246" height="3.2" fill="#fbc10d" shape-rendering="auto"/>
<rect x="417" y="372.2" width="25" height="3.2" fill="#fbc10d" shape-rendering="auto"/>
<rect x="468" y="372.2" width="272" height="3.2" fill="#fbc10d" shape-rendering="auto"/>
<rect x="752" y="372.2" width="534" height="3.2" fill="#fbc10d" shape-rendering="auto"/>
<rect x="1361" y="372.2" width="443" height="3.2" fill="#fbc10d" shape-rendering="auto"/>
<rect x="52" y="411.9" width="81" height="5.0" fill="#f69413" shape-rendering="auto"/>
<rect x="167" y="411.9" width="246" height="5.0" fill="#f69413" shape-rendering="auto"/>
<rect x="417" y="411.9" width="25" height="5.0" fill="#f69413" shape-rendering="auto"/>
<rect x="468" y="411.9" width="272" height="5.0" fill="#f69413" shape-rendering="auto"/>
<rect x="752" y="411.9" width="534" height="5.0" fill="#f69413" shape-rendering="auto"/>
<rect x="1361" y="411.9" width="443" height="5.0" fill="#f69413" shape-rendering="auto"/>
<rect x="52" y="412.6" width="81" height="3.6" fill="#e8202c" shape-rendering="auto"/>
<rect x="167" y="412.6" width="246" height="3.6" fill="#e8202c" shape-rendering="auto"/>
<rect x="417" y="412.6" width="25" height="3.6" fill="#e8202c" shape-rendering="auto"/>
<rect x="468" y="412.6" width="272" height="3.6" fill="#e8202c" shape-rendering="auto"/>
<rect x="752" y="412.6" width="534" height="3.6" fill="#e8202c" shape-rendering="auto"/>
<rect x="1361" y="412.6" width="443" height="3.6" fill="#e8202c" shape-rendering="auto"/>
<rect x="52" y="454.3" width="81" height="3.6" fill="#f9aa0f" shape-rendering="auto"/>
<rect x="167" y="454.3" width="246" height="3.6" fill="#f9aa0f" shape-rendering="auto"/>
<rect x="417" y="454.3" width="25" height="3.6" fill="#f9aa0f" shape-rendering="auto"/>
<rect x="468" y="454.3" width="159" height="3.6" fill="#f9aa0f" shape-rendering="auto"/>
<rect x="664" y="454.3" width="76" height="3.6" fill="#f9aa0f" shape-rendering="auto"/>
<rect x="752" y="454.3" width="534" height="3.6" fill="#f9aa0f" shape-rendering="auto"/>
<rect x="1388" y="454.3" width="416" height="3.6" fill="#f9aa0f" shape-rendering="auto"/>
<rect x="52" y="455.0" width="81" height="2.2" fill="#eb5528" shape-rendering="auto"/>
<rect x="167" y="455.0" width="246" height="2.2" fill="#eb5528" shape-rendering="auto"/>
<rect x="417" y="455.0" width="25" height="2.2" fill="#eb5528" shape-rendering="auto"/>
<rect x="468" y="455.0" width="159" height="2.2" fill="#eb5528" shape-rendering="auto"/>
<rect x="664" y="455.0" width="76" height="2.2" fill="#eb5528" shape-rendering="auto"/>
<rect x="752" y="455.0" width="534" height="2.2" fill="#eb5528" shape-rendering="auto"/>
<rect x="1388" y="455.0" width="416" height="2.2" fill="#eb5528" shape-rendering="auto"/>
<rect x="52" y="516.8" width="81" height="3.4" fill="#f9aa0f" shape-rendering="auto"/>
<rect x="167" y="516.8" width="246" height="3.4" fill="#f9aa0f" shape-rendering="auto"/>
<rect x="417" y="516.8" width="25" height="3.4" fill="#f9aa0f" shape-rendering="auto"/>
<rect x="468" y="516.8" width="272" height="3.4" fill="#f9aa0f" shape-rendering="auto"/>
<rect x="752" y="516.8" width="534" height="3.4" fill="#f9aa0f" shape-rendering="auto"/>
<rect x="1361" y="516.8" width="443" height="3.4" fill="#f9aa0f" shape-rendering="auto"/>
<rect x="52" y="517.5" width="81" height="2.0" fill="#ee5e23" shape-rendering="auto"/>
<rect x="167" y="517.5" width="246" height="2.0" fill="#ee5e23" shape-rendering="auto"/>
<rect x="417" y="517.5" width="25" height="2.0" fill="#ee5e23" shape-rendering="auto"/>
<rect x="468" y="517.5" width="272" height="2.0" fill="#ee5e23" shape-rendering="auto"/>
<rect x="752" y="517.5" width="534" height="2.0" fill="#ee5e23" shape-rendering="auto"/>
<rect x="1361" y="517.5" width="443" height="2.0" fill="#ee5e23" shape-rendering="auto"/>
<rect x="52" y="567.5" width="81" height="3.4" fill="#fab40e" shape-rendering="auto"/>
<rect x="167" y="567.5" width="246" height="3.4" fill="#fab40e" shape-rendering="auto"/>
<rect x="417" y="567.5" width="25" height="3.4" fill="#fab40e" shape-rendering="auto"/>
<rect x="468" y="567.5" width="272" height="3.4" fill="#fab40e" shape-rendering="auto"/>
<rect x="752" y="567.5" width="534" height="3.4" fill="#fab40e" shape-rendering="auto"/>
<rect x="1361" y="567.5" width="443" height="3.4" fill="#fab40e" shape-rendering="auto"/>
<rect x="52" y="568.2" width="81" height="2.0" fill="#f2741c" shape-rendering="auto"/>
<rect x="167" y="568.2" width="246" height="2.0" fill="#f2741c" shape-rendering="auto"/>
<rect x="417" y="568.2" width="25" height="2.0" fill="#f2741c" shape-rendering="auto"/>
<rect x="468" y="568.2" width="272" height="2.0" fill="#f2741c" shape-rendering="auto"/>
<rect x="752" y="568.2" width="534" height="2.0" fill="#f2741c" shape-rendering="auto"/>
<rect x="1361" y="568.2" width="443" height="2.0" fill="#f2741c" shape-rendering="auto"/>
<rect x="52" y="628.4" width="81" height="4.6" fill="#f0ec1e" shape-rendering="auto"/>
<rect x="167" y="628.4" width="246" height="4.6" fill="#f0ec1e" shape-rendering="auto"/>
<rect x="417" y="628.4" width="25" height="4.6" fill="#f0ec1e" shape-rendering="auto"/>
<rect x="468" y="628.4" width="159" height="4.6" fill="#f0ec1e" shape-rendering="auto"/>
<rect x="664" y="628.4" width="76" height="4.6" fill="#f0ec1e" shape-rendering="auto"/>
<rect x="752" y="628.4" width="534" height="4.6" fill="#f0ec1e" shape-rendering="auto"/>
<rect x="1388" y="628.4" width="416" height="4.6" fill="#f0ec1e" shape-rendering="auto"/>
<rect x="52" y="629.2" width="81" height="3.0" fill="#e7262e" shape-rendering="auto"/>
<rect x="167" y="629.2" width="246" height="3.0" fill="#e7262e" shape-rendering="auto"/>
<rect x="417" y="629.2" width="25" height="3.0" fill="#e7262e" shape-rendering="auto"/>
<rect x="468" y="629.2" width="159" height="3.0" fill="#e7262e" shape-rendering="auto"/>
<rect x="664" y="629.2" width="76" height="3.0" fill="#e7262e" shape-rendering="auto"/>
<rect x="752" y="629.2" width="534" height="3.0" fill="#e7262e" shape-rendering="auto"/>
<rect x="1388" y="629.2" width="416" height="3.0" fill="#e7262e" shape-rendering="auto"/>
<rect x="52" y="656.8" width="81" height="2.8" fill="#ecef20" shape-rendering="auto"/>
<rect x="167" y="656.8" width="246" height="2.8" fill="#ecef20" shape-rendering="auto"/>
<rect x="417" y="656.8" width="25" height="2.8" fill="#ecef20" shape-rendering="auto"/>
<rect x="468" y="656.8" width="272" height="2.8" fill="#ecef20" shape-rendering="auto"/>
<rect x="752" y="656.8" width="534" height="2.8" fill="#ecef20" shape-rendering="auto"/>
<rect x="1361" y="656.8" width="443" height="2.8" fill="#ecef20" shape-rendering="auto"/>
<rect x="52" y="669.0" width="81" height="6.8" fill="#e9ee21" shape-rendering="auto"/>
<rect x="167" y="669.0" width="246" height="6.8" fill="#e9ee21" shape-rendering="auto"/>
<rect x="417" y="669.0" width="25" height="6.8" fill="#e9ee21" shape-rendering="auto"/>
<rect x="468" y="669.0" width="272" height="6.8" fill="#e9ee21" shape-rendering="auto"/>
<rect x="752" y="669.0" width="534" height="6.8" fill="#e9ee21" shape-rendering="auto"/>
<rect x="1361" y="669.0" width="443" height="6.8" fill="#e9ee21" shape-rendering="auto"/>
<rect x="52" y="669.9" width="81" height="5.0" fill="#f58e15" shape-rendering="auto"/>
<rect x="167" y="669.9" width="246" height="5.0" fill="#f58e15" shape-rendering="auto"/>
<rect x="417" y="669.9" width="25" height="5.0" fill="#f58e15" shape-rendering="auto"/>
<rect x="468" y="669.9" width="272" height="5.0" fill="#f58e15" shape-rendering="auto"/>
<rect x="752" y="669.9" width="534" height="5.0" fill="#f58e15" shape-rendering="auto"/>
<rect x="1361" y="669.9" width="443" height="5.0" fill="#f58e15" shape-rendering="auto"/>
<rect x="52" y="670.6" width="81" height="3.6" fill="#e51b39" shape-rendering="auto"/>
<rect x="167" y="670.6" width="246" height="3.6" fill="#e51b39" shape-rendering="auto"/>
<rect x="417" y="670.6" width="25" height="3.6" fill="#e51b39" shape-rendering="auto"/>
<rect x="468" y="670.6" width="272" height="3.6" fill="#e51b39" shape-rendering="auto"/>
<rect x="752" y="670.6" width="534" height="3.6" fill="#e51b39" shape-rendering="auto"/>
<rect x="1361" y="670.6" width="443" height="3.6" fill="#e51b39" shape-rendering="auto"/>
<rect x="52" y="713.1" width="81" height="2.8" fill="#e9ee21" shape-rendering="auto"/>
<rect x="167" y="713.1" width="246" height="2.8" fill="#e9ee21" shape-rendering="auto"/>
<rect x="417" y="713.1" width="25" height="2.8" fill="#e9ee21" shape-rendering="auto"/>
<rect x="468" y="713.1" width="159" height="2.8" fill="#e9ee21" shape-rendering="auto"/>
<rect x="664" y="713.1" width="76" height="2.8" fill="#e9ee21" shape-rendering="auto"/>
<rect x="752" y="713.1" width="534" height="2.8" fill="#e9ee21" shape-rendering="auto"/>
<rect x="1388" y="713.1" width="416" height="2.8" fill="#e9ee21" shape-rendering="auto"/>
<rect x="52" y="792.5" width="81" height="3.2" fill="#ecef20" shape-rendering="auto"/>
<rect x="167" y="792.5" width="246" height="3.2" fill="#ecef20" shape-rendering="auto"/>
<rect x="417" y="792.5" width="25" height="3.2" fill="#ecef20" shape-rendering="auto"/>
<rect x="468" y="792.5" width="272" height="3.2" fill="#ecef20" shape-rendering="auto"/>
<rect x="752" y="792.5" width="534" height="3.2" fill="#ecef20" shape-rendering="auto"/>
<rect x="1361" y="792.5" width="443" height="3.2" fill="#ecef20" shape-rendering="auto"/>
<rect x="52" y="829.6" width="81" height="2.0" fill="#ecef20" shape-rendering="auto"/>
<rect x="167" y="829.6" width="246" height="2.0" fill="#ecef20" shape-rendering="auto"/>
<rect x="417" y="829.6" width="25" height="2.0" fill="#ecef20" shape-rendering="auto"/>
<rect x="468" y="829.6" width="272" height="2.0" fill="#ecef20" shape-rendering="auto"/>
<rect x="752" y="829.6" width="534" height="2.0" fill="#ecef20" shape-rendering="auto"/>
<rect x="1361" y="829.6" width="443" height="2.0" fill="#ecef20" shape-rendering="auto"/>
<rect x="52" y="861.7" width="81" height="2.4" fill="#e9ee21" shape-rendering="auto"/>
<rect x="167" y="861.7" width="246" height="2.4" fill="#e9ee21" shape-rendering="auto"/>
<rect x="417" y="861.7" width="25" height="2.4" fill="#e9ee21" shape-rendering="auto"/>
<rect x="468" y="861.7" width="272" height="2.4" fill="#e9ee21" shape-rendering="auto"/>
<rect x="752" y="861.7" width="534" height="2.4" fill="#e9ee21" shape-rendering="auto"/>
<rect x="1361" y="861.7" width="443" height="2.4" fill="#e9ee21" shape-rendering="auto"/>
<line x1="630.5" y1="714.0" x2="633.2" y2="705.0" stroke="#f9a70f" stroke-width="1.6" stroke-dasharray="3 1.5" stroke-opacity="1" shape-rendering="auto"/>
<line x1="633.2" y1="705.0" x2="636.0" y2="696.0" stroke="#f8a110" stroke-width="1.6" stroke-dasharray="3 1.5" stroke-opacity="1" shape-rendering="auto"/>
<line x1="636.0" y1="696.0" x2="638.8" y2="687.0" stroke="#f79c11" stroke-width="1.6" stroke-dasharray="3 1.5" stroke-opacity="1" shape-rendering="auto"/>
<line x1="638.8" y1="687.0" x2="641.5" y2="678.0" stroke="#f79812" stroke-width="1.6" stroke-dasharray="3 1.5" stroke-opacity="1" shape-rendering="auto"/>
<line x1="641.5" y1="678.0" x2="644.2" y2="669.0" stroke="#f69413" stroke-width="1.6" stroke-dasharray="3 1.5" stroke-opacity="1" shape-rendering="auto"/>
<line x1="644.2" y1="669.0" x2="647.0" y2="660.0" stroke="#f69015" stroke-width="1.6" stroke-dasharray="3 1.5" stroke-opacity="1" shape-rendering="auto"/>
<line x1="647.0" y1="660.0" x2="650.0" y2="650.3" stroke="#f37d19" stroke-width="1.8" stroke-dasharray="3 1.5" stroke-opacity="1" shape-rendering="auto"/>
<line x1="650.0" y1="650.3" x2="653.0" y2="640.7" stroke="#f2761b" stroke-width="1.8" stroke-dasharray="3 1.5" stroke-opacity="1" shape-rendering="auto"/>
<line x1="653.0" y1="640.7" x2="656.0" y2="631.0" stroke="#f16e1d" stroke-width="1.8" stroke-dasharray="3 1.5" stroke-opacity="1" shape-rendering="auto"/>
<line x1="656.0" y1="631.0" x2="659.0" y2="621.3" stroke="#f0661f" stroke-width="1.8" stroke-dasharray="3 1.5" stroke-opacity="1" shape-rendering="auto"/>
<line x1="659.0" y1="621.3" x2="662.0" y2="611.7" stroke="#ed5b24" stroke-width="1.8" stroke-dasharray="3 1.5" stroke-opacity="1" shape-rendering="auto"/>
<line x1="662.0" y1="611.7" x2="665.0" y2="602.0" stroke="#e9512a" stroke-width="1.8" stroke-dasharray="3 1.5" stroke-opacity="1" shape-rendering="auto"/>
<line x1="650.0" y1="690.0" x2="657.0" y2="716.0" stroke="#d6e526" stroke-width="1.2" stroke-dasharray="1.5 2.5" stroke-opacity="0.9" shape-rendering="auto"/>
<line x1="657.0" y1="716.0" x2="664.0" y2="742.0" stroke="#cfe127" stroke-width="1.2" stroke-dasharray="1.5 2.5" stroke-opacity="0.9" shape-rendering="auto"/>
<line x1="659.5" y1="302.0" x2="658.5" y2="314.0" stroke="#f9a60f" stroke-width="1.4" stroke-dasharray="2 2" stroke-opacity="1" shape-rendering="auto"/>
<line x1="658.5" y1="314.0" x2="657.5" y2="326.0" stroke="#f69114" stroke-width="1.4" stroke-dasharray="2 2" stroke-opacity="1" shape-rendering="auto"/>
<line x1="655.0" y1="336.0" x2="659.5" y2="370.0" stroke="#d9e625" stroke-width="1.2" stroke-dasharray="2 2.5" stroke-opacity="0.8" shape-rendering="auto"/>
<line x1="654.0" y1="446.0" x2="659.0" y2="464.0" stroke="#f16a1e" stroke-width="1.3" stroke-dasharray="2.5 1.5" stroke-opacity="1" shape-rendering="auto"/>
<line x1="659.0" y1="464.0" x2="664.0" y2="482.0" stroke="#ef6220" stroke-width="1.3" stroke-dasharray="2.5 1.5" stroke-opacity="1" shape-rendering="auto"/>
<line x1="660.0" y1="82.0" x2="659.0" y2="130.0" stroke="#d9e625" stroke-width="1.1" stroke-dasharray="2 3" stroke-opacity="0.7" shape-rendering="auto"/>
<line x1="1361.5" y1="690.0" x2="1363.1" y2="684.3" stroke="#f89f10" stroke-width="1.6" stroke-dasharray="3 1.5" stroke-opacity="1" shape-rendering="auto"/>
<line x1="1363.1" y1="684.3" x2="1364.7" y2="678.7" stroke="#f79a12" stroke-width="1.6" stroke-dasharray="3 1.5" stroke-opacity="1" shape-rendering="auto"/>
<line x1="1364.7" y1="678.7" x2="1366.2" y2="673.0" stroke="#f79613" stroke-width="1.6" stroke-dasharray="3 1.5" stroke-opacity="1" shape-rendering="auto"/>
<line x1="1366.2" y1="673.0" x2="1367.8" y2="667.3" stroke="#f69214" stroke-width="1.6" stroke-dasharray="3 1.5" stroke-opacity="1" shape-rendering="auto"/>
<line x1="1367.8" y1="667.3" x2="1369.4" y2="661.7" stroke="#f58e15" stroke-width="1.6" stroke-dasharray="3 1.5" stroke-opacity="1" shape-rendering="auto"/>
<line x1="1369.4" y1="661.7" x2="1371.0" y2="656.0" stroke="#f58a16" stroke-width="1.6" stroke-dasharray="3 1.5" stroke-opacity="1" shape-rendering="auto"/>
<line x1="1371.0" y1="656.0" x2="1373.8" y2="646.7" stroke="#f2771b" stroke-width="1.8" stroke-dasharray="3 1.5" stroke-opacity="1" shape-rendering="auto"/>
<line x1="1373.8" y1="646.7" x2="1376.7" y2="637.3" stroke="#f1701c" stroke-width="1.8" stroke-dasharray="3 1.5" stroke-opacity="1" shape-rendering="auto"/>
<line x1="1376.7" y1="637.3" x2="1379.5" y2="628.0" stroke="#f16a1e" stroke-width="1.8" stroke-dasharray="3 1.5" stroke-opacity="1" shape-rendering="auto"/>
<line x1="1379.5" y1="628.0" x2="1382.3" y2="618.7" stroke="#ef6220" stroke-width="1.8" stroke-dasharray="3 1.5" stroke-opacity="1" shape-rendering="auto"/>
<line x1="1382.3" y1="618.7" x2="1385.2" y2="609.3" stroke="#ec5925" stroke-width="1.8" stroke-dasharray="3 1.5" stroke-opacity="1" shape-rendering="auto"/>
<line x1="1385.2" y1="609.3" x2="1388.0" y2="600.0" stroke="#e9502a" stroke-width="1.8" stroke-dasharray="3 1.5" stroke-opacity="1" shape-rendering="auto"/>
<line x1="1368.0" y1="680.0" x2="1378.0" y2="712.0" stroke="#d6e526" stroke-width="1.2" stroke-dasharray="1.5 2.5" stroke-opacity="0.9" shape-rendering="auto"/>
<line x1="1378.0" y1="712.0" x2="1388.0" y2="744.0" stroke="#cfe127" stroke-width="1.2" stroke-dasharray="1.5 2.5" stroke-opacity="0.9" shape-rendering="auto"/>
<line x1="1380.0" y1="322.0" x2="1384.0" y2="340.0" stroke="#e4ec22" stroke-width="1.2" stroke-dasharray="2 2" stroke-opacity="0.8" shape-rendering="auto"/>
<line x1="1381.0" y1="100.0" x2="1384.0" y2="118.0" stroke="#dfe923" stroke-width="1.1" stroke-dasharray="2 2" stroke-opacity="0.7" shape-rendering="auto"/>
<rect x="133" y="70" width="34" height="861" fill="#fff"/>
<rect x="413" y="70" width="4" height="861" fill="#fff"/>
<rect x="442" y="70" width="26" height="861" fill="#fff"/>
<rect x="740" y="70" width="12" height="861" fill="#fff"/>
<rect x="1286" y="70" width="75" height="861" fill="#fff"/>
<rect x="52" y="63" width="1" height="5" fill="#fff"/>
<rect x="1803" y="63" width="1" height="5" fill="#fff"/>
<rect x="55" y="65" width="1" height="3" fill="#fff"/>
<rect x="66" y="65" width="1" height="3" fill="#fff"/>
<rect x="76" y="65" width="1" height="3" fill="#fff"/>
<rect x="86" y="65" width="1" height="3" fill="#fff"/>
<rect x="97" y="63" width="1" height="5" fill="#fff"/>
<rect x="107" y="65" width="1" height="3" fill="#fff"/>
<rect x="118" y="65" width="1" height="3" fill="#fff"/>
<rect x="128" y="65" width="1" height="3" fill="#fff"/>
<rect x="139" y="65" width="1" height="3" fill="#fff"/>
<rect x="149" y="63" width="1" height="5" fill="#fff"/>
<rect x="159" y="65" width="1" height="3" fill="#fff"/>
<rect x="170" y="65" width="1" height="3" fill="#fff"/>
<rect x="180" y="65" width="1" height="3" fill="#fff"/>
<rect x="191" y="65" width="1" height="3" fill="#fff"/>
<rect x="201" y="63" width="1" height="5" fill="#fff"/>
<rect x="211" y="65" width="1" height="3" fill="#fff"/>
<rect x="222" y="65" width="1" height="3" fill="#fff"/>
<rect x="232" y="65" width="1" height="3" fill="#fff"/>
<rect x="243" y="65" width="1" height="3" fill="#fff"/>
<rect x="253" y="63" width="1" height="5" fill="#fff"/>
<rect x="264" y="65" width="1" height="3" fill="#fff"/>
<rect x="274" y="65" width="1" height="3" fill="#fff"/>
<rect x="284" y="65" width="1" height="3" fill="#fff"/>
<rect x="295" y="65" width="1" height="3" fill="#fff"/>
<rect x="305" y="63" width="1" height="5" fill="#fff"/>
<rect x="316" y="65" width="1" height="3" fill="#fff"/>
<rect x="326" y="65" width="1" height="3" fill="#fff"/>
<rect x="337" y="65" width="1" height="3" fill="#fff"/>
<rect x="347" y="65" width="1" height="3" fill="#fff"/>
<rect x="357" y="63" width="1" height="5" fill="#fff"/>
<rect x="368" y="65" width="1" height="3" fill="#fff"/>
<rect x="378" y="65" width="1" height="3" fill="#fff"/>
<rect x="389" y="65" width="1" height="3" fill="#fff"/>
<rect x="399" y="65" width="1" height="3" fill="#fff"/>
<rect x="409" y="63" width="1" height="5" fill="#fff"/>
<rect x="420" y="65" width="1" height="3" fill="#fff"/>
<rect x="430" y="65" width="1" height="3" fill="#fff"/>
<rect x="441" y="65" width="1" height="3" fill="#fff"/>
<rect x="451" y="65" width="1" height="3" fill="#fff"/>
<rect x="462" y="63" width="1" height="5" fill="#fff"/>
<rect x="472" y="65" width="1" height="3" fill="#fff"/>
<rect x="482" y="65" width="1" height="3" fill="#fff"/>
<rect x="493" y="65" width="1" height="3" fill="#fff"/>
<rect x="503" y="65" width="1" height="3" fill="#fff"/>
<rect x="514" y="63" width="1" height="5" fill="#fff"/>
<rect x="524" y="65" width="1" height="3" fill="#fff"/>
<rect x="535" y="65" width="1" height="3" fill="#fff"/>
<rect x="545" y="65" width="1" height="3" fill="#fff"/>
<rect x="555" y="65" width="1" height="3" fill="#fff"/>
<rect x="566" y="63" width="1" height="5" fill="#fff"/>
<rect x="576" y="65" width="1" height="3" fill="#fff"/>
<rect x="587" y="65" width="1" height="3" fill="#fff"/>
<rect x="597" y="65" width="1" height="3" fill="#fff"/>
<rect x="608" y="65" width="1" height="3" fill="#fff"/>
<rect x="618" y="63" width="1" height="5" fill="#fff"/>
<rect x="628" y="65" width="1" height="3" fill="#fff"/>
<rect x="639" y="65" width="1" height="3" fill="#fff"/>
<rect x="649" y="65" width="1" height="3" fill="#fff"/>
<rect x="660" y="65" width="1" height="3" fill="#fff"/>
<rect x="670" y="63" width="1" height="5" fill="#fff"/>
<rect x="680" y="65" width="1" height="3" fill="#fff"/>
<rect x="691" y="65" width="1" height="3" fill="#fff"/>
<rect x="701" y="65" width="1" height="3" fill="#fff"/>
<rect x="712" y="65" width="1" height="3" fill="#fff"/>
<rect x="722" y="63" width="1" height="5" fill="#fff"/>
<rect x="733" y="65" width="1" height="3" fill="#fff"/>
<rect x="743" y="65" width="1" height="3" fill="#fff"/>
<rect x="753" y="65" width="1" height="3" fill="#fff"/>
<rect x="764" y="65" width="1" height="3" fill="#fff"/>
<rect x="774" y="63" width="1" height="5" fill="#fff"/>
<rect x="785" y="65" width="1" height="3" fill="#fff"/>
<rect x="795" y="65" width="1" height="3" fill="#fff"/>
<rect x="806" y="65" width="1" height="3" fill="#fff"/>
<rect x="816" y="65" width="1" height="3" fill="#fff"/>
<rect x="826" y="63" width="1" height="5" fill="#fff"/>
<rect x="837" y="65" width="1" height="3" fill="#fff"/>
<rect x="847" y="65" width="1" height="3" fill="#fff"/>
<rect x="858" y="65" width="1" height="3" fill="#fff"/>
<rect x="868" y="65" width="1" height="3" fill="#fff"/>
<rect x="879" y="63" width="1" height="5" fill="#fff"/>
<rect x="889" y="65" width="1" height="3" fill="#fff"/>
<rect x="899" y="65" width="1" height="3" fill="#fff"/>
<rect x="910" y="65" width="1" height="3" fill="#fff"/>
<rect x="920" y="65" width="1" height="3" fill="#fff"/>
<rect x="931" y="63" width="1" height="5" fill="#fff"/>
<rect x="941" y="65" width="1" height="3" fill="#fff"/>
<rect x="951" y="65" width="1" height="3" fill="#fff"/>
<rect x="962" y="65" width="1" height="3" fill="#fff"/>
<rect x="972" y="65" width="1" height="3" fill="#fff"/>
<rect x="983" y="63" width="1" height="5" fill="#fff"/>
<rect x="993" y="65" width="1" height="3" fill="#fff"/>
<rect x="1004" y="65" width="1" height="3" fill="#fff"/>
<rect x="1014" y="65" width="1" height="3" fill="#fff"/>
<rect x="1024" y="65" width="1" height="3" fill="#fff"/>
<rect x="1035" y="63" width="1" height="5" fill="#fff"/>
<rect x="1045" y="65" width="1" height="3" fill="#fff"/>
<rect x="1056" y="65" width="1" height="3" fill="#fff"/>
<rect x="1066" y="65" width="1" height="3" fill="#fff"/>
<rect x="1077" y="65" width="1" height="3" fill="#fff"/>
<rect x="1087" y="63" width="1" height="5" fill="#fff"/>
<rect x="1097" y="65" width="1" height="3" fill="#fff"/>
<rect x="1108" y="65" width="1" height="3" fill="#fff"/>
<rect x="1118" y="65" width="1" height="3" fill="#fff"/>
<rect x="1129" y="65" width="1" height="3" fill="#fff"/>
<rect x="1139" y="63" width="1" height="5" fill="#fff"/>
<rect x="1150" y="65" width="1" height="3" fill="#fff"/>
<rect x="1160" y="65" width="1" height="3" fill="#fff"/>
<rect x="1170" y="65" width="1" height="3" fill="#fff"/>
<rect x="1181" y="65" width="1" height="3" fill="#fff"/>
<rect x="1191" y="63" width="1" height="5" fill="#fff"/>
<rect x="1202" y="65" width="1" height="3" fill="#fff"/>
<rect x="1212" y="65" width="1" height="3" fill="#fff"/>
<rect x="1222" y="65" width="1" height="3" fill="#fff"/>
<rect x="1233" y="65" width="1" height="3" fill="#fff"/>
<rect x="1243" y="63" width="1" height="5" fill="#fff"/>
<rect x="1254" y="65" width="1" height="3" fill="#fff"/>
<rect x="1264" y="65" width="1" height="3" fill="#fff"/>
<rect x="1275" y="65" width="1" height="3" fill="#fff"/>
<rect x="1285" y="65" width="1" height="3" fill="#fff"/>
<rect x="1295" y="63" width="1" height="5" fill="#fff"/>
<rect x="1306" y="65" width="1" height="3" fill="#fff"/>
<rect x="1316" y="65" width="1" height="3" fill="#fff"/>
<rect x="1327" y="65" width="1" height="3" fill="#fff"/>
<rect x="1337" y="65" width="1" height="3" fill="#fff"/>
<rect x="1348" y="63" width="1" height="5" fill="#fff"/>
<rect x="1358" y="65" width="1" height="3" fill="#fff"/>
<rect x="1368" y="65" width="1" height="3" fill="#fff"/>
<rect x="1379" y="65" width="1" height="3" fill="#fff"/>
<rect x="1389" y="65" width="1" height="3" fill="#fff"/>
<rect x="1400" y="63" width="1" height="5" fill="#fff"/>
<rect x="1410" y="65" width="1" height="3" fill="#fff"/>
<rect x="1420" y="65" width="1" height="3" fill="#fff"/>
<rect x="1431" y="65" width="1" height="3" fill="#fff"/>
<rect x="1441" y="65" width="1" height="3" fill="#fff"/>
<rect x="1452" y="63" width="1" height="5" fill="#fff"/>
<rect x="1462" y="65" width="1" height="3" fill="#fff"/>
<rect x="1473" y="65" width="1" height="3" fill="#fff"/>
<rect x="1483" y="65" width="1" height="3" fill="#fff"/>
<rect x="1493" y="65" width="1" height="3" fill="#fff"/>
<rect x="1504" y="63" width="1" height="5" fill="#fff"/>
<rect x="1514" y="65" width="1" height="3" fill="#fff"/>
<rect x="1525" y="65" width="1" height="3" fill="#fff"/>
<rect x="1535" y="65" width="1" height="3" fill="#fff"/>
<rect x="1546" y="65" width="1" height="3" fill="#fff"/>
<rect x="1556" y="63" width="1" height="5" fill="#fff"/>
<rect x="1566" y="65" width="1" height="3" fill="#fff"/>
<rect x="1577" y="65" width="1" height="3" fill="#fff"/>
<rect x="1587" y="65" width="1" height="3" fill="#fff"/>
<rect x="1598" y="65" width="1" height="3" fill="#fff"/>
<rect x="1608" y="63" width="1" height="5" fill="#fff"/>
<rect x="1619" y="65" width="1" height="3" fill="#fff"/>
<rect x="1629" y="65" width="1" height="3" fill="#fff"/>
<rect x="1639" y="65" width="1" height="3" fill="#fff"/>
<rect x="1650" y="65" width="1" height="3" fill="#fff"/>
<rect x="1660" y="63" width="1" height="5" fill="#fff"/>
<rect x="1671" y="65" width="1" height="3" fill="#fff"/>
<rect x="1681" y="65" width="1" height="3" fill="#fff"/>
<rect x="1691" y="65" width="1" height="3" fill="#fff"/>
<rect x="1702" y="65" width="1" height="3" fill="#fff"/>
<rect x="1712" y="63" width="1" height="5" fill="#fff"/>
<rect x="1723" y="65" width="1" height="3" fill="#fff"/>
<rect x="1733" y="65" width="1" height="3" fill="#fff"/>
<rect x="1744" y="65" width="1" height="3" fill="#fff"/>
<rect x="1754" y="65" width="1" height="3" fill="#fff"/>
<rect x="1764" y="63" width="1" height="5" fill="#fff"/>
<rect x="1775" y="65" width="1" height="3" fill="#fff"/>
<rect x="1785" y="65" width="1" height="3" fill="#fff"/>
<rect x="1796" y="65" width="1" height="3" fill="#fff"/>
<rect x="52" y="933" width="1" height="5" fill="#fff"/>
<rect x="1803" y="933" width="1" height="5" fill="#fff"/>
<rect x="56" y="933" width="1" height="3" fill="#fff"/>
<rect x="63" y="933" width="1" height="3" fill="#fff"/>
<rect x="69" y="933" width="1" height="3" fill="#fff"/>
<rect x="75" y="933" width="1" height="3" fill="#fff"/>
<rect x="82" y="933" width="1" height="3" fill="#fff"/>
<rect x="88" y="933" width="1" height="5" fill="#fff"/>
<rect x="94" y="933" width="1" height="3" fill="#fff"/>
<rect x="101" y="933" width="1" height="3" fill="#fff"/>
<rect x="107" y="933" width="1" height="3" fill="#fff"/>
<rect x="114" y="933" width="1" height="3" fill="#fff"/>
<rect x="120" y="933" width="1" height="3" fill="#fff"/>
<rect x="126" y="933" width="1" height="3" fill="#fff"/>
<rect x="133" y="933" width="1" height="3" fill="#fff"/>
<rect x="139" y="933" width="1" height="3" fill="#fff"/>
<rect x="145" y="933" width="1" height="3" fill="#fff"/>
<rect x="152" y="933" width="1" height="3" fill="#fff"/>
<rect x="158" y="933" width="1" height="3" fill="#fff"/>
<rect x="164" y="933" width="1" height="5" fill="#fff"/>
<rect x="171" y="933" width="1" height="3" fill="#fff"/>
<rect x="177" y="933" width="1" height="3" fill="#fff"/>
<rect x="184" y="933" width="1" height="3" fill="#fff"/>
<rect x="190" y="933" width="1" height="3" fill="#fff"/>
<rect x="196" y="933" width="1" height="3" fill="#fff"/>
<rect x="203" y="933" width="1" height="3" fill="#fff"/>
<rect x="209" y="933" width="1" height="3" fill="#fff"/>
<rect x="215" y="933" width="1" height="3" fill="#fff"/>
<rect x="222" y="933" width="1" height="3" fill="#fff"/>
<rect x="228" y="933" width="1" height="3" fill="#fff"/>
<rect x="234" y="933" width="1" height="3" fill="#fff"/>
<rect x="241" y="933" width="1" height="5" fill="#fff"/>
<rect x="247" y="933" width="1" height="3" fill="#fff"/>
<rect x="253" y="933" width="1" height="3" fill="#fff"/>
<rect x="260" y="933" width="1" height="3" fill="#fff"/>
<rect x="266" y="933" width="1" height="3" fill="#fff"/>
<rect x="273" y="933" width="1" height="3" fill="#fff"/>
<rect x="279" y="933" width="1" height="3" fill="#fff"/>
<rect x="285" y="933" width="1" height="3" fill="#fff"/>
<rect x="292" y="933" width="1" height="3" fill="#fff"/>
<rect x="298" y="933" width="1" height="3" fill="#fff"/>
<rect x="304" y="933" width="1" height="3" fill="#fff"/>
<rect x="311" y="933" width="1" height="3" fill="#fff"/>
<rect x="317" y="933" width="1" height="5" fill="#fff"/>
<rect x="323" y="933" width="1" height="3" fill="#fff"/>
<rect x="330" y="933" width="1" height="3" fill="#fff"/>
<rect x="336" y="933" width="1" height="3" fill="#fff"/>
<rect x="343" y="933" width="1" height="3" fill="#fff"/>
<rect x="349" y="933" width="1" height="3" fill="#fff"/>
<rect x="355" y="933" width="1" height="3" fill="#fff"/>
<rect x="362" y="933" width="1" height="3" fill="#fff"/>
<rect x="368" y="933" width="1" height="3" fill="#fff"/>
<rect x="374" y="933" width="1" height="3" fill="#fff"/>
<rect x="381" y="933" width="1" height="3" fill="#fff"/>
<rect x="387" y="933" width="1" height="3" fill="#fff"/>
<rect x="393" y="933" width="1" height="5" fill="#fff"/>
<rect x="400" y="933" width="1" height="3" fill="#fff"/>
<rect x="406" y="933" width="1" height="3" fill="#fff"/>
<rect x="413" y="933" width="1" height="3" fill="#fff"/>
<rect x="419" y="933" width="1" height="3" fill="#fff"/>
<rect x="425" y="933" width="1" height="3" fill="#fff"/>
<rect x="432" y="933" width="1" height="3" fill="#fff"/>
<rect x="438" y="933" width="1" height="3" fill="#fff"/>
<rect x="444" y="933" width="1" height="3" fill="#fff"/>
<rect x="451" y="933" width="1" height="3" fill="#fff"/>
<rect x="457" y="933" width="1" height="3" fill="#fff"/>
<rect x="463" y="933" width="1" height="3" fill="#fff"/>
<rect x="470" y="933" width="1" height="5" fill="#fff"/>
<rect x="476" y="933" width="1" height="3" fill="#fff"/>
<rect x="482" y="933" width="1" height="3" fill="#fff"/>
<rect x="489" y="933" width="1" height="3" fill="#fff"/>
<rect x="495" y="933" width="1" height="3" fill="#fff"/>
<rect x="502" y="933" width="1" height="3" fill="#fff"/>
<rect x="508" y="933" width="1" height="3" fill="#fff"/>
<rect x="514" y="933" width="1" height="3" fill="#fff"/>
<rect x="521" y="933" width="1" height="3" fill="#fff"/>
<rect x="527" y="933" width="1" height="3" fill="#fff"/>
<rect x="533" y="933" width="1" height="3" fill="#fff"/>
<rect x="540" y="933" width="1" height="3" fill="#fff"/>
<rect x="546" y="933" width="1" height="5" fill="#fff"/>
<rect x="552" y="933" width="1" height="3" fill="#fff"/>
<rect x="559" y="933" width="1" height="3" fill="#fff"/>
<rect x="565" y="933" width="1" height="3" fill="#fff"/>
<rect x="572" y="933" width="1" height="3" fill="#fff"/>
<rect x="578" y="933" width="1" height="3" fill="#fff"/>
<rect x="584" y="933" width="1" height="3" fill="#fff"/>
<rect x="591" y="933" width="1" height="3" fill="#fff"/>
<rect x="597" y="933" width="1" height="3" fill="#fff"/>
<rect x="603" y="933" width="1" height="3" fill="#fff"/>
<rect x="610" y="933" width="1" height="3" fill="#fff"/>
<rect x="616" y="933" width="1" height="3" fill="#fff"/>
<rect x="622" y="933" width="1" height="5" fill="#fff"/>
<rect x="629" y="933" width="1" height="3" fill="#fff"/>
<rect x="635" y="933" width="1" height="3" fill="#fff"/>
<rect x="642" y="933" width="1" height="3" fill="#fff"/>
<rect x="648" y="933" width="1" height="3" fill="#fff"/>
<rect x="654" y="933" width="1" height="3" fill="#fff"/>
<rect x="661" y="933" width="1" height="3" fill="#fff"/>
<rect x="667" y="933" width="1" height="3" fill="#fff"/>
<rect x="673" y="933" width="1" height="3" fill="#fff"/>
<rect x="680" y="933" width="1" height="3" fill="#fff"/>
<rect x="686" y="933" width="1" height="3" fill="#fff"/>
<rect x="692" y="933" width="1" height="3" fill="#fff"/>
<rect x="699" y="933" width="1" height="5" fill="#fff"/>
<rect x="705" y="933" width="1" height="3" fill="#fff"/>
<rect x="712" y="933" width="1" height="3" fill="#fff"/>
<rect x="718" y="933" width="1" height="3" fill="#fff"/>
<rect x="724" y="933" width="1" height="3" fill="#fff"/>
<rect x="731" y="933" width="1" height="3" fill="#fff"/>
<rect x="737" y="933" width="1" height="3" fill="#fff"/>
<rect x="743" y="933" width="1" height="3" fill="#fff"/>
<rect x="750" y="933" width="1" height="3" fill="#fff"/>
<rect x="756" y="933" width="1" height="3" fill="#fff"/>
<rect x="762" y="933" width="1" height="3" fill="#fff"/>
<rect x="769" y="933" width="1" height="3" fill="#fff"/>
<rect x="775" y="933" width="1" height="5" fill="#fff"/>
<rect x="781" y="933" width="1" height="3" fill="#fff"/>
<rect x="788" y="933" width="1" height="3" fill="#fff"/>
<rect x="794" y="933" width="1" height="3" fill="#fff"/>
<rect x="801" y="933" width="1" height="3" fill="#fff"/>
<rect x="807" y="933" width="1" height="3" fill="#fff"/>
<rect x="813" y="933" width="1" height="3" fill="#fff"/>
<rect x="820" y="933" width="1" height="3" fill="#fff"/>
<rect x="826" y="933" width="1" height="3" fill="#fff"/>
<rect x="832" y="933" width="1" height="3" fill="#fff"/>
<rect x="839" y="933" width="1" height="3" fill="#fff"/>
<rect x="845" y="933" width="1" height="3" fill="#fff"/>
<rect x="851" y="933" width="1" height="5" fill="#fff"/>
<rect x="858" y="933" width="1" height="3" fill="#fff"/>
<rect x="864" y="933" width="1" height="3" fill="#fff"/>
<rect x="871" y="933" width="1" height="3" fill="#fff"/>
<rect x="877" y="933" width="1" height="3" fill="#fff"/>
<rect x="883" y="933" width="1" height="3" fill="#fff"/>
<rect x="890" y="933" width="1" height="3" fill="#fff"/>
<rect x="896" y="933" width="1" height="3" fill="#fff"/>
<rect x="902" y="933" width="1" height="3" fill="#fff"/>
<rect x="909" y="933" width="1" height="3" fill="#fff"/>
<rect x="915" y="933" width="1" height="3" fill="#fff"/>
<rect x="921" y="933" width="1" height="3" fill="#fff"/>
<rect x="928" y="933" width="1" height="5" fill="#fff"/>
<rect x="934" y="933" width="1" height="3" fill="#fff"/>
<rect x="941" y="933" width="1" height="3" fill="#fff"/>
<rect x="947" y="933" width="1" height="3" fill="#fff"/>
<rect x="953" y="933" width="1" height="3" fill="#fff"/>
<rect x="960" y="933" width="1" height="3" fill="#fff"/>
<rect x="966" y="933" width="1" height="3" fill="#fff"/>
<rect x="972" y="933" width="1" height="3" fill="#fff"/>
<rect x="979" y="933" width="1" height="3" fill="#fff"/>
<rect x="985" y="933" width="1" height="3" fill="#fff"/>
<rect x="991" y="933" width="1" height="3" fill="#fff"/>
<rect x="998" y="933" width="1" height="3" fill="#fff"/>
<rect x="1004" y="933" width="1" height="5" fill="#fff"/>
<rect x="1010" y="933" width="1" height="3" fill="#fff"/>
<rect x="1017" y="933" width="1" height="3" fill="#fff"/>
<rect x="1023" y="933" width="1" height="3" fill="#fff"/>
<rect x="1030" y="933" width="1" height="3" fill="#fff"/>
<rect x="1036" y="933" width="1" height="3" fill="#fff"/>
<rect x="1042" y="933" width="1" height="3" fill="#fff"/>
<rect x="1049" y="933" width="1" height="3" fill="#fff"/>
<rect x="1055" y="933" width="1" height="3" fill="#fff"/>
<rect x="1061" y="933" width="1" height="3" fill="#fff"/>
<rect x="1068" y="933" width="1" height="3" fill="#fff"/>
<rect x="1074" y="933" width="1" height="3" fill="#fff"/>
<rect x="1080" y="933" width="1" height="5" fill="#fff"/>
<rect x="1087" y="933" width="1" height="3" fill="#fff"/>
<rect x="1093" y="933" width="1" height="3" fill="#fff"/>
<rect x="1100" y="933" width="1" height="3" fill="#fff"/>
<rect x="1106" y="933" width="1" height="3" fill="#fff"/>
<rect x="1112" y="933" width="1" height="3" fill="#fff"/>
<rect x="1119" y="933" width="1" height="3" fill="#fff"/>
<rect x="1125" y="933" width="1" height="3" fill="#fff"/>
<rect x="1131" y="933" width="1" height="3" fill="#fff"/>
<rect x="1138" y="933" width="1" height="3" fill="#fff"/>
<rect x="1144" y="933" width="1" height="3" fill="#fff"/>
<rect x="1150" y="933" width="1" height="3" fill="#fff"/>
<rect x="1157" y="933" width="1" height="5" fill="#fff"/>
<rect x="1163" y="933" width="1" height="3" fill="#fff"/>
<rect x="1170" y="933" width="1" height="3" fill="#fff"/>
<rect x="1176" y="933" width="1" height="3" fill="#fff"/>
<rect x="1182" y="933" width="1" height="3" fill="#fff"/>
<rect x="1189" y="933" width="1" height="3" fill="#fff"/>
<rect x="1195" y="933" width="1" height="3" fill="#fff"/>
<rect x="1201" y="933" width="1" height="3" fill="#fff"/>
<rect x="1208" y="933" width="1" height="3" fill="#fff"/>
<rect x="1214" y="933" width="1" height="3" fill="#fff"/>
<rect x="1220" y="933" width="1" height="3" fill="#fff"/>
<rect x="1227" y="933" width="1" height="3" fill="#fff"/>
<rect x="1233" y="933" width="1" height="5" fill="#fff"/>
<rect x="1240" y="933" width="1" height="3" fill="#fff"/>
<rect x="1246" y="933" width="1" height="3" fill="#fff"/>
<rect x="1252" y="933" width="1" height="3" fill="#fff"/>
<rect x="1259" y="933" width="1" height="3" fill="#fff"/>
<rect x="1265" y="933" width="1" height="3" fill="#fff"/>
<rect x="1271" y="933" width="1" height="3" fill="#fff"/>
<rect x="1278" y="933" width="1" height="3" fill="#fff"/>
<rect x="1284" y="933" width="1" height="3" fill="#fff"/>
<rect x="1290" y="933" width="1" height="3" fill="#fff"/>
<rect x="1297" y="933" width="1" height="3" fill="#fff"/>
<rect x="1303" y="933" width="1" height="3" fill="#fff"/>
<rect x="1309" y="933" width="1" height="5" fill="#fff"/>
<rect x="1316" y="933" width="1" height="3" fill="#fff"/>
<rect x="1322" y="933" width="1" height="3" fill="#fff"/>
<rect x="1329" y="933" width="1" height="3" fill="#fff"/>
<rect x="1335" y="933" width="1" height="3" fill="#fff"/>
<rect x="1341" y="933" width="1" height="3" fill="#fff"/>
<rect x="1348" y="933" width="1" height="3" fill="#fff"/>
<rect x="1354" y="933" width="1" height="3" fill="#fff"/>
<rect x="1360" y="933" width="1" height="3" fill="#fff"/>
<rect x="1367" y="933" width="1" height="3" fill="#fff"/>
<rect x="1373" y="933" width="1" height="3" fill="#fff"/>
<rect x="1379" y="933" width="1" height="3" fill="#fff"/>
<rect x="1386" y="933" width="1" height="5" fill="#fff"/>
<rect x="1392" y="933" width="1" height="3" fill="#fff"/>
<rect x="1399" y="933" width="1" height="3" fill="#fff"/>
<rect x="1405" y="933" width="1" height="3" fill="#fff"/>
<rect x="1411" y="933" width="1" height="3" fill="#fff"/>
<rect x="1418" y="933" width="1" height="3" fill="#fff"/>
<rect x="1424" y="933" width="1" height="3" fill="#fff"/>
<rect x="1430" y="933" width="1" height="3" fill="#fff"/>
<rect x="1437" y="933" width="1" height="3" fill="#fff"/>
<rect x="1443" y="933" width="1" height="3" fill="#fff"/>
<rect x="1449" y="933" width="1" height="3" fill="#fff"/>
<rect x="1456" y="933" width="1" height="3" fill="#fff"/>
<rect x="1462" y="933" width="1" height="5" fill="#fff"/>
<rect x="1469" y="933" width="1" height="3" fill="#fff"/>
<rect x="1475" y="933" width="1" height="3" fill="#fff"/>
<rect x="1481" y="933" width="1" height="3" fill="#fff"/>
<rect x="1488" y="933" width="1" height="3" fill="#fff"/>
<rect x="1494" y="933" width="1" height="3" fill="#fff"/>
<rect x="1500" y="933" width="1" height="3" fill="#fff"/>
<rect x="1507" y="933" width="1" height="3" fill="#fff"/>
<rect x="1513" y="933" width="1" height="3" fill="#fff"/>
<rect x="1519" y="933" width="1" height="3" fill="#fff"/>
<rect x="1526" y="933" width="1" height="3" fill="#fff"/>
<rect x="1532" y="933" width="1" height="3" fill="#fff"/>
<rect x="1538" y="933" width="1" height="5" fill="#fff"/>
<rect x="1545" y="933" width="1" height="3" fill="#fff"/>
<rect x="1551" y="933" width="1" height="3" fill="#fff"/>
<rect x="1558" y="933" width="1" height="3" fill="#fff"/>
<rect x="1564" y="933" width="1" height="3" fill="#fff"/>
<rect x="1570" y="933" width="1" height="3" fill="#fff"/>
<rect x="1577" y="933" width="1" height="3" fill="#fff"/>
<rect x="1583" y="933" width="1" height="3" fill="#fff"/>
<rect x="1589" y="933" width="1" height="3" fill="#fff"/>
<rect x="1596" y="933" width="1" height="3" fill="#fff"/>
<rect x="1602" y="933" width="1" height="3" fill="#fff"/>
<rect x="1608" y="933" width="1" height="3" fill="#fff"/>
<rect x="1615" y="933" width="1" height="5" fill="#fff"/>
<rect x="1621" y="933" width="1" height="3" fill="#fff"/>
<rect x="1628" y="933" width="1" height="3" fill="#fff"/>
<rect x="1634" y="933" width="1" height="3" fill="#fff"/>
<rect x="1640" y="933" width="1" height="3" fill="#fff"/>
<rect x="1647" y="933" width="1" height="3" fill="#fff"/>
<rect x="1653" y="933" width="1" height="3" fill="#fff"/>
<rect x="1659" y="933" width="1" height="3" fill="#fff"/>
<rect x="1666" y="933" width="1" height="3" fill="#fff"/>
<rect x="1672" y="933" width="1" height="3" fill="#fff"/>
<rect x="1678" y="933" width="1" height="3" fill="#fff"/>
<rect x="1685" y="933" width="1" height="3" fill="#fff"/>
<rect x="1691" y="933" width="1" height="5" fill="#fff"/>
<rect x="1698" y="933" width="1" height="3" fill="#fff"/>
<rect x="1704" y="933" width="1" height="3" fill="#fff"/>
<rect x="1710" y="933" width="1" height="3" fill="#fff"/>
<rect x="1717" y="933" width="1" height="3" fill="#fff"/>
<rect x="1723" y="933" width="1" height="3" fill="#fff"/>
<rect x="1729" y="933" width="1" height="3" fill="#fff"/>
<rect x="1736" y="933" width="1" height="3" fill="#fff"/>
<rect x="1742" y="933" width="1" height="3" fill="#fff"/>
<rect x="1748" y="933" width="1" height="3" fill="#fff"/>
<rect x="1755" y="933" width="1" height="3" fill="#fff"/>
<rect x="1761" y="933" width="1" height="3" fill="#fff"/>
<rect x="1768" y="933" width="1" height="5" fill="#fff"/>
<rect x="1774" y="933" width="1" height="3" fill="#fff"/>
<rect x="1780" y="933" width="1" height="3" fill="#fff"/>
<rect x="1787" y="933" width="1" height="3" fill="#fff"/>
<rect x="1793" y="933" width="1" height="3" fill="#fff"/>
<rect x="1799" y="933" width="1" height="3" fill="#fff"/>
<rect x="45" y="930" width="5" height="1" fill="#fff"/>
<rect x="1806" y="930" width="5" height="1" fill="#fff"/>
<rect x="47" y="919" width="3" height="1" fill="#fff"/>
<rect x="1806" y="919" width="3" height="1" fill="#fff"/>
<rect x="45" y="908" width="5" height="1" fill="#fff"/>
<rect x="1806" y="908" width="5" height="1" fill="#fff"/>
<rect x="47" y="898" width="3" height="1" fill="#fff"/>
<rect x="1806" y="898" width="3" height="1" fill="#fff"/>
<rect x="45" y="887" width="5" height="1" fill="#fff"/>
<rect x="1806" y="887" width="5" height="1" fill="#fff"/>
<rect x="47" y="876" width="3" height="1" fill="#fff"/>
<rect x="1806" y="876" width="3" height="1" fill="#fff"/>
<rect x="45" y="865" width="5" height="1" fill="#fff"/>
<rect x="1806" y="865" width="5" height="1" fill="#fff"/>
<rect x="47" y="855" width="3" height="1" fill="#fff"/>
<rect x="1806" y="855" width="3" height="1" fill="#fff"/>
<rect x="45" y="844" width="5" height="1" fill="#fff"/>
<rect x="1806" y="844" width="5" height="1" fill="#fff"/>
<rect x="47" y="833" width="3" height="1" fill="#fff"/>
<rect x="1806" y="833" width="3" height="1" fill="#fff"/>
<rect x="45" y="822" width="5" height="1" fill="#fff"/>
<rect x="1806" y="822" width="5" height="1" fill="#fff"/>
<rect x="47" y="812" width="3" height="1" fill="#fff"/>
<rect x="1806" y="812" width="3" height="1" fill="#fff"/>
<rect x="45" y="801" width="5" height="1" fill="#fff"/>
<rect x="1806" y="801" width="5" height="1" fill="#fff"/>
<rect x="47" y="790" width="3" height="1" fill="#fff"/>
<rect x="1806" y="790" width="3" height="1" fill="#fff"/>
<rect x="45" y="779" width="5" height="1" fill="#fff"/>
<rect x="1806" y="779" width="5" height="1" fill="#fff"/>
<rect x="47" y="769" width="3" height="1" fill="#fff"/>
<rect x="1806" y="769" width="3" height="1" fill="#fff"/>
<rect x="45" y="758" width="5" height="1" fill="#fff"/>
<rect x="1806" y="758" width="5" height="1" fill="#fff"/>
<rect x="47" y="747" width="3" height="1" fill="#fff"/>
<rect x="1806" y="747" width="3" height="1" fill="#fff"/>
<rect x="45" y="736" width="5" height="1" fill="#fff"/>
<rect x="1806" y="736" width="5" height="1" fill="#fff"/>
<rect x="47" y="726" width="3" height="1" fill="#fff"/>
<rect x="1806" y="726" width="3" height="1" fill="#fff"/>
<rect x="45" y="715" width="5" height="1" fill="#fff"/>
<rect x="1806" y="715" width="5" height="1" fill="#fff"/>
<rect x="47" y="704" width="3" height="1" fill="#fff"/>
<rect x="1806" y="704" width="3" height="1" fill="#fff"/>
<rect x="45" y="693" width="5" height="1" fill="#fff"/>
<rect x="1806" y="693" width="5" height="1" fill="#fff"/>
<rect x="47" y="683" width="3" height="1" fill="#fff"/>
<rect x="1806" y="683" width="3" height="1" fill="#fff"/>
<rect x="45" y="672" width="5" height="1" fill="#fff"/>
<rect x="1806" y="672" width="5" height="1" fill="#fff"/>
<rect x="47" y="661" width="3" height="1" fill="#fff"/>
<rect x="1806" y="661" width="3" height="1" fill="#fff"/>
<rect x="45" y="650" width="5" height="1" fill="#fff"/>
<rect x="1806" y="650" width="5" height="1" fill="#fff"/>
<rect x="47" y="640" width="3" height="1" fill="#fff"/>
<rect x="1806" y="640" width="3" height="1" fill="#fff"/>
<rect x="45" y="629" width="5" height="1" fill="#fff"/>
<rect x="1806" y="629" width="5" height="1" fill="#fff"/>
<rect x="47" y="618" width="3" height="1" fill="#fff"/>
<rect x="1806" y="618" width="3" height="1" fill="#fff"/>
<rect x="45" y="607" width="5" height="1" fill="#fff"/>
<rect x="1806" y="607" width="5" height="1" fill="#fff"/>
<rect x="47" y="597" width="3" height="1" fill="#fff"/>
<rect x="1806" y="597" width="3" height="1" fill="#fff"/>
<rect x="45" y="586" width="5" height="1" fill="#fff"/>
<rect x="1806" y="586" width="5" height="1" fill="#fff"/>
<rect x="47" y="575" width="3" height="1" fill="#fff"/>
<rect x="1806" y="575" width="3" height="1" fill="#fff"/>
<rect x="45" y="564" width="5" height="1" fill="#fff"/>
<rect x="1806" y="564" width="5" height="1" fill="#fff"/>
<rect x="47" y="554" width="3" height="1" fill="#fff"/>
<rect x="1806" y="554" width="3" height="1" fill="#fff"/>
<rect x="45" y="543" width="5" height="1" fill="#fff"/>
<rect x="1806" y="543" width="5" height="1" fill="#fff"/>
<rect x="47" y="532" width="3" height="1" fill="#fff"/>
<rect x="1806" y="532" width="3" height="1" fill="#fff"/>
<rect x="45" y="521" width="5" height="1" fill="#fff"/>
<rect x="1806" y="521" width="5" height="1" fill="#fff"/>
<rect x="47" y="511" width="3" height="1" fill="#fff"/>
<rect x="1806" y="511" width="3" height="1" fill="#fff"/>
<rect x="45" y="500" width="5" height="1" fill="#fff"/>
<rect x="1806" y="500" width="5" height="1" fill="#fff"/>
<rect x="47" y="489" width="3" height="1" fill="#fff"/>
<rect x="1806" y="489" width="3" height="1" fill="#fff"/>
<rect x="45" y="478" width="5" height="1" fill="#fff"/>
<rect x="1806" y="478" width="5" height="1" fill="#fff"/>
<rect x="47" y="468" width="3" height="1" fill="#fff"/>
<rect x="1806" y="468" width="3" height="1" fill="#fff"/>
<rect x="45" y="457" width="5" height="1" fill="#fff"/>
<rect x="1806" y="457" width="5" height="1" fill="#fff"/>
<rect x="47" y="446" width="3" height="1" fill="#fff"/>
<rect x="1806" y="446" width="3" height="1" fill="#fff"/>
<rect x="45" y="435" width="5" height="1" fill="#fff"/>
<rect x="1806" y="435" width="5" height="1" fill="#fff"/>
<rect x="47" y="425" width="3" height="1" fill="#fff"/>
<rect x="1806" y="425" width="3" height="1" fill="#fff"/>
<rect x="45" y="414" width="5" height="1" fill="#fff"/>
<rect x="1806" y="414" width="5" height="1" fill="#fff"/>
<rect x="47" y="403" width="3" height="1" fill="#fff"/>
<rect x="1806" y="403" width="3" height="1" fill="#fff"/>
<rect x="45" y="392" width="5" height="1" fill="#fff"/>
<rect x="1806" y="392" width="5" height="1" fill="#fff"/>
<rect x="47" y="382" width="3" height="1" fill="#fff"/>
<rect x="1806" y="382" width="3" height="1" fill="#fff"/>
<rect x="45" y="371" width="5" height="1" fill="#fff"/>
<rect x="1806" y="371" width="5" height="1" fill="#fff"/>
<rect x="47" y="360" width="3" height="1" fill="#fff"/>
<rect x="1806" y="360" width="3" height="1" fill="#fff"/>
<rect x="45" y="349" width="5" height="1" fill="#fff"/>
<rect x="1806" y="349" width="5" height="1" fill="#fff"/>
<rect x="47" y="339" width="3" height="1" fill="#fff"/>
<rect x="1806" y="339" width="3" height="1" fill="#fff"/>
<rect x="45" y="328" width="5" height="1" fill="#fff"/>
<rect x="1806" y="328" width="5" height="1" fill="#fff"/>
<rect x="47" y="317" width="3" height="1" fill="#fff"/>
<rect x="1806" y="317" width="3" height="1" fill="#fff"/>
<rect x="45" y="306" width="5" height="1" fill="#fff"/>
<rect x="1806" y="306" width="5" height="1" fill="#fff"/>
<rect x="47" y="296" width="3" height="1" fill="#fff"/>
<rect x="1806" y="296" width="3" height="1" fill="#fff"/>
<rect x="45" y="285" width="5" height="1" fill="#fff"/>
<rect x="1806" y="285" width="5" height="1" fill="#fff"/>
<rect x="47" y="274" width="3" height="1" fill="#fff"/>
<rect x="1806" y="274" width="3" height="1" fill="#fff"/>
<rect x="45" y="263" width="5" height="1" fill="#fff"/>
<rect x="1806" y="263" width="5" height="1" fill="#fff"/>
<rect x="47" y="253" width="3" height="1" fill="#fff"/>
<rect x="1806" y="253" width="3" height="1" fill="#fff"/>
<rect x="45" y="242" width="5" height="1" fill="#fff"/>
<rect x="1806" y="242" width="5" height="1" fill="#fff"/>
<rect x="47" y="231" width="3" height="1" fill="#fff"/>
<rect x="1806" y="231" width="3" height="1" fill="#fff"/>
<rect x="45" y="220" width="5" height="1" fill="#fff"/>
<rect x="1806" y="220" width="5" height="1" fill="#fff"/>
<rect x="47" y="210" width="3" height="1" fill="#fff"/>
<rect x="1806" y="210" width="3" height="1" fill="#fff"/>
<rect x="45" y="199" width="5" height="1" fill="#fff"/>
<rect x="1806" y="199" width="5" height="1" fill="#fff"/>
<rect x="47" y="188" width="3" height="1" fill="#fff"/>
<rect x="1806" y="188" width="3" height="1" fill="#fff"/>
<rect x="45" y="177" width="5" height="1" fill="#fff"/>
<rect x="1806" y="177" width="5" height="1" fill="#fff"/>
<rect x="47" y="167" width="3" height="1" fill="#fff"/>
<rect x="1806" y="167" width="3" height="1" fill="#fff"/>
<rect x="45" y="156" width="5" height="1" fill="#fff"/>
<rect x="1806" y="156" width="5" height="1" fill="#fff"/>
<rect x="47" y="145" width="3" height="1" fill="#fff"/>
<rect x="1806" y="145" width="3" height="1" fill="#fff"/>
<rect x="45" y="134" width="5" height="1" fill="#fff"/>
<rect x="1806" y="134" width="5" height="1" fill="#fff"/>
<rect x="47" y="124" width="3" height="1" fill="#fff"/>
<rect x="1806" y="124" width="3" height="1" fill="#fff"/>
<rect x="45" y="113" width="5" height="1" fill="#fff"/>
<rect x="1806" y="113" width="5" height="1" fill="#fff"/>
<rect x="47" y="102" width="3" height="1" fill="#fff"/>
<rect x="1806" y="102" width="3" height="1" fill="#fff"/>
<rect x="45" y="91" width="5" height="1" fill="#fff"/>
<rect x="1806" y="91" width="5" height="1" fill="#fff"/>
<rect x="47" y="81" width="3" height="1" fill="#fff"/>
<rect x="1806" y="81" width="3" height="1" fill="#fff"/>
<rect x="45" y="70" width="5" height="1" fill="#fff"/>
<rect x="1806" y="70" width="5" height="1" fill="#fff"/>
<rect x="1841" y="74" width="18" height="3" fill="#e8508a"/>
<rect x="1841" y="79" width="18" height="857" fill="url(#cb)"/>
<rect x="1841" y="937" width="18" height="3" fill="#fff"/>
</svg>
<div class="t b" style="left:809px;top:6px;transform-origin:0 0;transform:scaleX(0.9375);">AOS</div>
<div class="t b" style="left:838px;top:6px;transform-origin:0 0;transform:scaleX(0.9882);">Thu 26 Feb 2026 14:02:05</div>
<div class="t b" style="left:971px;top:6px;transform-origin:0 0;transform:scaleX(0.9375);">AOS</div>
<div class="t b" style="left:728px;top:18px;transform-origin:0 0;transform:scaleX(0.9742);">CoordSystem:es19</div>
<div class="t b" style="left:832px;top:18px;transform-origin:0 0;transform:scaleX(0.9547);">SensorID:es19</div>
<div class="t b" style="left:916px;top:18px;transform-origin:0 0;transform:scaleX(1.0000);">Axis:sum</div>
<div class="t b" style="left:976px;top:18px;transform-origin:0 0;transform:scaleX(0.9375);">Windowing:Hanning</div>
<div class="t b" style="left:619px;top:30px;transform-origin:0 0;transform:scaleX(1.0158);">Cuttoff(Hz):200</div>
<div class="t b" style="left:714px;top:30px;transform-origin:0 0;transform:scaleX(0.9910);">df(Hz):0.2441</div>
<div class="t b" style="left:800px;top:30px;transform-origin:0 0;transform:scaleX(0.9695);">Sample/Sec:500</div>
<div class="t b" style="left:900px;top:30px;transform-origin:0 0;transform:scaleX(0.9944);">PSD size:2048</div>
<div class="t b" style="left:994px;top:30px;transform-origin:0 0;transform:scaleX(0.9754);">Overlap(%):0</div>
<div class="t b" style="left:1082px;top:30px;transform-origin:0 0;transform:scaleX(0.9922);">TimeRes.(sec):4.096</div>
<div class="t c" style="left:52px;top:51px;">4357</div>
<div class="t c" style="left:97px;top:51px;">4400</div>
<div class="t c" style="left:149px;top:51px;">4450</div>
<div class="t c" style="left:201px;top:51px;">4500</div>
<div class="t c" style="left:253px;top:51px;">4550</div>
<div class="t c" style="left:305px;top:51px;">4600</div>
<div class="t c" style="left:357px;top:51px;">4650</div>
<div class="t c" style="left:409px;top:51px;">4700</div>
<div class="t c" style="left:462px;top:51px;">4750</div>
<div class="t c" style="left:514px;top:51px;">4800</div>
<div class="t c" style="left:566px;top:51px;">4850</div>
<div class="t c" style="left:618px;top:51px;">4900</div>
<div class="t c" style="left:670px;top:51px;">4950</div>
<div class="t c" style="left:722px;top:51px;">5000</div>
<div class="t c" style="left:774px;top:51px;">5050</div>
<div class="t c" style="left:826px;top:51px;">5100</div>
<div class="t c" style="left:879px;top:51px;">5150</div>
<div class="t c" style="left:931px;top:51px;">5200</div>
<div class="t c" style="left:983px;top:51px;">5250</div>
<div class="t c" style="left:1035px;top:51px;">5300</div>
<div class="t c" style="left:1087px;top:51px;">5350</div>
<div class="t c" style="left:1139px;top:51px;">5400</div>
<div class="t c" style="left:1191px;top:51px;">5450</div>
<div class="t c" style="left:1243px;top:51px;">5500</div>
<div class="t c" style="left:1295px;top:51px;">5550</div>
<div class="t c" style="left:1348px;top:51px;">5600</div>
<div class="t c" style="left:1400px;top:51px;">5650</div>
<div class="t c" style="left:1452px;top:51px;">5700</div>
<div class="t c" style="left:1504px;top:51px;">5750</div>
<div class="t c" style="left:1556px;top:51px;">5800</div>
<div class="t c" style="left:1608px;top:51px;">5850</div>
<div class="t c" style="left:1660px;top:51px;">5900</div>
<div class="t c" style="left:1712px;top:51px;">5950</div>
<div class="t c" style="left:1764px;top:51px;">6000</div>
<div class="t c" style="left:1803px;top:51px;">6037</div>
<div class="t r" style="left:0px;top:924px;width:43px;">0</div>
<div class="t r" style="left:0px;top:902px;width:43px;">5</div>
<div class="t r" style="left:0px;top:881px;width:43px;">10</div>
<div class="t r" style="left:0px;top:859px;width:43px;">15</div>
<div class="t r" style="left:0px;top:838px;width:43px;">20</div>
<div class="t r" style="left:0px;top:816px;width:43px;">25</div>
<div class="t r" style="left:0px;top:795px;width:43px;">30</div>
<div class="t r" style="left:0px;top:773px;width:43px;">35</div>
<div class="t r" style="left:0px;top:752px;width:43px;">40</div>
<div class="t r" style="left:0px;top:730px;width:43px;">45</div>
<div class="t r" style="left:0px;top:709px;width:43px;">50</div>
<div class="t r" style="left:0px;top:687px;width:43px;">55</div>
<div class="t r" style="left:0px;top:666px;width:43px;">60</div>
<div class="t r" style="left:0px;top:644px;width:43px;">65</div>
<div class="t r" style="left:0px;top:623px;width:43px;">70</div>
<div class="t r" style="left:0px;top:601px;width:43px;">75</div>
<div class="t r" style="left:0px;top:580px;width:43px;">80</div>
<div class="t r" style="left:0px;top:558px;width:43px;">85</div>
<div class="t r" style="left:0px;top:537px;width:43px;">90</div>
<div class="t r" style="left:0px;top:515px;width:43px;">95</div>
<div class="t r" style="left:0px;top:494px;width:43px;">100</div>
<div class="t r" style="left:0px;top:472px;width:43px;">105</div>
<div class="t r" style="left:0px;top:451px;width:43px;">110</div>
<div class="t r" style="left:0px;top:429px;width:43px;">115</div>
<div class="t r" style="left:0px;top:408px;width:43px;">120</div>
<div class="t r" style="left:0px;top:386px;width:43px;">125</div>
<div class="t r" style="left:0px;top:365px;width:43px;">130</div>
<div class="t r" style="left:0px;top:343px;width:43px;">135</div>
<div class="t r" style="left:0px;top:322px;width:43px;">140</div>
<div class="t r" style="left:0px;top:300px;width:43px;">145</div>
<div class="t r" style="left:0px;top:279px;width:43px;">150</div>
<div class="t r" style="left:0px;top:257px;width:43px;">155</div>
<div class="t r" style="left:0px;top:236px;width:43px;">160</div>
<div class="t r" style="left:0px;top:214px;width:43px;">165</div>
<div class="t r" style="left:0px;top:193px;width:43px;">170</div>
<div class="t r" style="left:0px;top:171px;width:43px;">175</div>
<div class="t r" style="left:0px;top:150px;width:43px;">180</div>
<div class="t r" style="left:0px;top:128px;width:43px;">185</div>
<div class="t r" style="left:0px;top:107px;width:43px;">190</div>
<div class="t r" style="left:0px;top:85px;width:43px;">195</div>
<div class="t r" style="left:0px;top:64px;width:43px;">200</div>
<div class="t c" style="left:51.5px;top:938px;">12:07:38.215</div>
<div class="t c" style="left:51.5px;top:950px;">02/26/2026</div>
<div class="t c" style="left:163.5px;top:938px;">12:15:00.000</div>
<div class="t c" style="left:163.5px;top:950px;">02/26/2026</div>
<div class="t c" style="left:240.5px;top:938px;">12:20:00.000</div>
<div class="t c" style="left:240.5px;top:950px;">02/26/2026</div>
<div class="t c" style="left:316.5px;top:938px;">12:25:00.000</div>
<div class="t c" style="left:316.5px;top:950px;">02/26/2026</div>
<div class="t c" style="left:392.5px;top:938px;">12:30:00.000</div>
<div class="t c" style="left:392.5px;top:950px;">02/26/2026</div>
<div class="t c" style="left:469.5px;top:938px;">12:35:00.000</div>
<div class="t c" style="left:469.5px;top:950px;">02/26/2026</div>
<div class="t c" style="left:545.5px;top:938px;">12:40:00.000</div>
<div class="t c" style="left:545.5px;top:950px;">02/26/2026</div>
<div class="t c" style="left:621.5px;top:938px;">12:45:00.000</div>
<div class="t c" style="left:621.5px;top:950px;">02/26/2026</div>
<div class="t c" style="left:698.5px;top:938px;">12:50:00.000</div>
<div class="t c" style="left:698.5px;top:950px;">02/26/2026</div>
<div class="t c" style="left:774.5px;top:938px;">12:55:00.000</div>
<div class="t c" style="left:774.5px;top:950px;">02/26/2026</div>
<div class="t c" style="left:850.5px;top:938px;">13:00:00.000</div>
<div class="t c" style="left:850.5px;top:950px;">02/26/2026</div>
<div class="t c" style="left:927.5px;top:938px;">13:05:00.000</div>
<div class="t c" style="left:927.5px;top:950px;">02/26/2026</div>
<div class="t c" style="left:1003.5px;top:938px;">13:10:00.000</div>
<div class="t c" style="left:1003.5px;top:950px;">02/26/2026</div>
<div class="t c" style="left:1079.5px;top:938px;">13:15:00.000</div>
<div class="t c" style="left:1079.5px;top:950px;">02/26/2026</div>
<div class="t c" style="left:1156.5px;top:938px;">13:20:00.000</div>
<div class="t c" style="left:1156.5px;top:950px;">02/26/2026</div>
<div class="t c" style="left:1232.5px;top:938px;">13:25:00.000</div>
<div class="t c" style="left:1232.5px;top:950px;">02/26/2026</div>
<div class="t c" style="left:1308.5px;top:938px;">13:30:00.000</div>
<div class="t c" style="left:1308.5px;top:950px;">02/26/2026</div>
<div class="t c" style="left:1385.5px;top:938px;">13:35:00.000</div>
<div class="t c" style="left:1385.5px;top:950px;">02/26/2026</div>
<div class="t c" style="left:1461.5px;top:938px;">13:40:00.000</div>
<div class="t c" style="left:1461.5px;top:950px;">02/26/2026</div>
<div class="t c" style="left:1537.5px;top:938px;">13:45:00.000</div>
<div class="t c" style="left:1537.5px;top:950px;">02/26/2026</div>
<div class="t c" style="left:1614.5px;top:938px;">13:50:00.000</div>
<div class="t c" style="left:1614.5px;top:950px;">02/26/2026</div>
<div class="t c" style="left:1690.5px;top:938px;">13:55:00.000</div>
<div class="t c" style="left:1690.5px;top:950px;">02/26/2026</div>
<div class="t c" style="left:1802.5px;top:938px;">14:02:19.496</div>
<div class="t c" style="left:1802.5px;top:950px;">02/26/2026</div>
<div class="t" style="left:925px;top:964px;transform:translateX(-50%) scaleX(0.8);">Time</div>
<div class="t " style="left:1869px;top:73px;">-5.00</div>
<div class="t " style="left:1869px;top:500.5px;">-9.00</div>
<div class="t " style="left:1869px;top:929px;">-13.00</div>
<div class="t" style="left:1913px;top:507px;transform:translate(-50%,-50%) rotate(90deg);">Amplitude(Log10(g^2/Hz))</div>
</body></html>
